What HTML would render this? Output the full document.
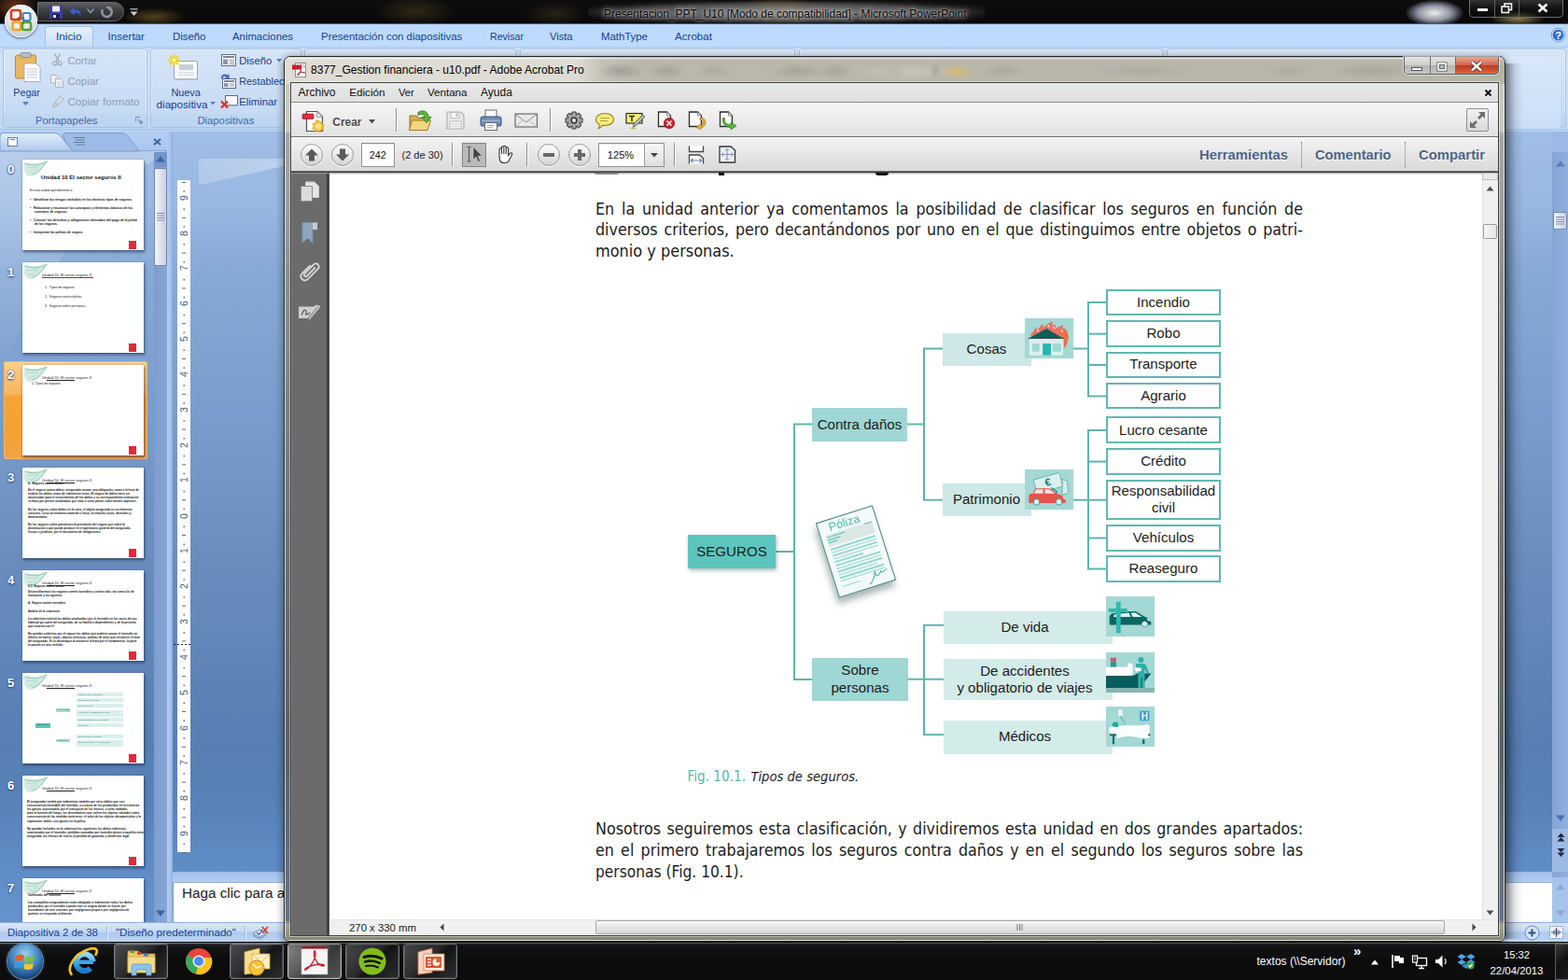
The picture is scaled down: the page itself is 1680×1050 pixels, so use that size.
<!DOCTYPE html>
<html lang="es">
<head>
<meta charset="utf-8">
<title>Presentacion_PPT_U10 - Microsoft PowerPoint</title>
<style>
*{box-sizing:border-box;margin:0;padding:0}
html,body{width:1680px;height:1050px;overflow:hidden;background:#0b0b0b}
body{position:relative;font-family:"Liberation Sans",sans-serif;font-size:12px;color:#15428b}
.a{position:absolute}
.t{position:absolute;white-space:nowrap;line-height:1}
svg{overflow:visible}
</style>
</head>
<body>
<!-- PowerPoint -->
<div class="a" style="left:0px;top:141px;width:1680px;height:847px;background:linear-gradient(#a0bee6,#98b7e1 9.3%,#87a9d5 18%,#7497c8 42.4%,#698cbd 54.8%,#577fb3 77.8%,#5882b8 85%,#5f8bc4 92%,#6390cb 96.7%,#6592cd);"></div><div class="a" style="left:0px;top:141px;width:179px;height:847px;overflow:hidden"><svg class="a" style="left:0px;top:0px;" width="179" height="300" viewBox="0 0 179 300"><defs><linearGradient id="sw" x1="0" y1="0" x2="0" y2="1"><stop offset="0" stop-color="#fff" stop-opacity=".28"/><stop offset="1" stop-color="#fff" stop-opacity="0"/></linearGradient></defs><path d="M0 0 H179 V20 C120 60 60 120 0 260 Z" fill="url(#sw)"/></svg></div><div class="a" style="left:0px;top:141px;width:179px;height:21px;background:linear-gradient(#b5cff2,#a9c6ee);border-bottom:1px solid #86a5d3"></div><svg class="a" style="left:0px;top:142px;" width="150" height="20" viewBox="0 0 150 20"><defs><linearGradient id="tg1" x1="0" y1="0" x2="0" y2="1"><stop offset="0" stop-color="#e3edfb"/><stop offset="1" stop-color="#aec9ee"/></linearGradient></defs><path d="M0 20 V4 Q0 0.5 4 0.5 H58 Q62 0.5 65 4 L78 20 Z" fill="url(#tg1)" stroke="#7f9dcd" stroke-width="1"/><path d="M71 11 L68 5 Q66 0.5 72 0.5 H130 Q134 0.5 137 4 L149 20 H78 Z" fill="#9dbbe6" stroke="#7c9bcb" stroke-width="1"/><rect x="8.5" y="5.5" width="10" height="9" fill="#fdfdfe" stroke="#6b7f9f"/><path d="M11 7.5 H16" stroke="#6b7f9f" stroke-width="1"/><path d="M79 5.5 H91 M81 8 H91 M79 10.5 H91 M81 13 H91" stroke="#6b7f9f" stroke-width="1"/></svg><svg class="a" style="left:164px;top:148px;" width="9" height="8" viewBox="0 0 9 8"><path d="M1 1 L8 7 M8 1 L1 7" stroke="#3f62a0" stroke-width="2"/></svg><div class="a" style="left:4px;top:387px;width:154px;height:105px;background:linear-gradient(#f9cf95,#f8b45c 33%,#f6a336 36%,#f5a234 80%,#f0a54a);border:1px solid #f2b772;border-radius:2px"></div><div class="a" style="left:24px;top:171px;width:130px;height:97px;background:#fff;box-shadow:1px 2px 3px rgba(20,35,70,.6),0 0 1px rgba(30,50,90,.5);overflow:hidden"><svg class="a" style="left:1px;top:1px" width="30" height="20" viewBox="0 0 30 20"><path d="M1 2 C9 4 20 3 27 0 C22 6 19 14 9 17 C4 18 1 14 1 9 Z" fill="#cfe9df" opacity=".9"/><path d="M2 3 C10 6 18 5 25 1 C20 7 17 13 9 15" fill="none" stroke="#8fc9b3" stroke-width="1"/><path d="M4 7 C8 8 12 8 15 6 C14 10 10 13 6 12" fill="none" stroke="#a9d6c6" stroke-width=".8"/></svg><div class="a" style="left:113.5px;top:87px;width:8.5px;height:9px;background:#e4283c"></div><span class="t" style="left:20px;top:16px;font-size:6px;color:#111;font-weight:bold;">Unidad 10 El sector seguros II</span><span class="t" style="left:8px;top:32px;font-size:3.2px;color:#111;">En esta unidad aprenderemos a:</span><span class="t" style="left:8px;top:42px;font-size:3.4px;color:#111;font-weight:bold;">•&nbsp;&nbsp;&nbsp;Identificar los riesgos incluidos en los distintos tipos de seguros.</span><span class="t" style="left:8px;top:51px;font-size:3.4px;color:#111;font-weight:bold;">•&nbsp;&nbsp;&nbsp;Relacionar y reconocer los conceptos y elementos básicos de los</span><span class="t" style="left:13px;top:55px;font-size:3.4px;color:#111;font-weight:bold;">contratos de seguros.</span><span class="t" style="left:8px;top:64px;font-size:3.4px;color:#111;font-weight:bold;">•&nbsp;&nbsp;&nbsp;Conocer los derechos y obligaciones derivados del pago de la prima</span><span class="t" style="left:13px;top:68px;font-size:3.4px;color:#111;font-weight:bold;">de los seguros.</span><span class="t" style="left:8px;top:77px;font-size:3.4px;color:#111;font-weight:bold;">•&nbsp;&nbsp;&nbsp;Interpretar las pólizas de seguro.</span></div><span class="t" style="left:8px;top:175px;font-size:13px;color:#fff;font-weight:bold;text-shadow:0 1px 2px #24447c,0 0 2px #2f5590">0</span><div class="a" style="left:24px;top:281px;width:130px;height:97px;background:#fff;box-shadow:1px 2px 3px rgba(20,35,70,.6),0 0 1px rgba(30,50,90,.5);overflow:hidden"><svg class="a" style="left:1px;top:1px" width="30" height="20" viewBox="0 0 30 20"><path d="M1 2 C9 4 20 3 27 0 C22 6 19 14 9 17 C4 18 1 14 1 9 Z" fill="#cfe9df" opacity=".9"/><path d="M2 3 C10 6 18 5 25 1 C20 7 17 13 9 15" fill="none" stroke="#8fc9b3" stroke-width="1"/><path d="M4 7 C8 8 12 8 15 6 C14 10 10 13 6 12" fill="none" stroke="#a9d6c6" stroke-width=".8"/></svg><div class="a" style="left:113.5px;top:87px;width:8.5px;height:9px;background:#e4283c"></div><span class="t" style="left:21px;top:12px;font-size:3.9px;color:#222;">Unidad 10. El sector seguros II</span><div class="a" style="left:26px;top:16.2px;width:30px;height:.6px;background:#222"></div><span class="t" style="left:24px;top:26px;font-size:3.5px;color:#111;">1.&nbsp;&nbsp;Tipos de seguros.</span><span class="t" style="left:24px;top:36px;font-size:3.5px;color:#111;">2.&nbsp;&nbsp;Seguros contra daños.</span><span class="t" style="left:24px;top:46px;font-size:3.5px;color:#111;">3.&nbsp;&nbsp;Seguros sobre personas.</span><div class="a" style="left:21px;top:16px;width:55px;height:1px;background:#b02020"></div></div><span class="t" style="left:8px;top:285px;font-size:13px;color:#fff;font-weight:bold;text-shadow:0 1px 2px #24447c,0 0 2px #2f5590">1</span><div class="a" style="left:24px;top:391px;width:130px;height:97px;background:#fff;box-shadow:1px 2px 3px rgba(20,35,70,.6),0 0 1px rgba(30,50,90,.5);overflow:hidden"><svg class="a" style="left:1px;top:1px" width="30" height="20" viewBox="0 0 30 20"><path d="M1 2 C9 4 20 3 27 0 C22 6 19 14 9 17 C4 18 1 14 1 9 Z" fill="#cfe9df" opacity=".9"/><path d="M2 3 C10 6 18 5 25 1 C20 7 17 13 9 15" fill="none" stroke="#8fc9b3" stroke-width="1"/><path d="M4 7 C8 8 12 8 15 6 C14 10 10 13 6 12" fill="none" stroke="#a9d6c6" stroke-width=".8"/></svg><div class="a" style="left:113.5px;top:87px;width:8.5px;height:9px;background:#e4283c"></div><span class="t" style="left:21px;top:12px;font-size:3.9px;color:#222;">Unidad 10. El sector seguros II</span><div class="a" style="left:26px;top:16.2px;width:30px;height:.6px;background:#222"></div><span class="t" style="left:10px;top:19px;font-size:3.5px;color:#111;">1. Tipos de seguros.</span></div><span class="t" style="left:8px;top:395px;font-size:13px;color:#fff;font-weight:bold;text-shadow:0 1px 2px #24447c,0 0 2px #2f5590">2</span><div class="a" style="left:24px;top:501px;width:130px;height:97px;background:#fff;box-shadow:1px 2px 3px rgba(20,35,70,.6),0 0 1px rgba(30,50,90,.5);overflow:hidden"><svg class="a" style="left:1px;top:1px" width="30" height="20" viewBox="0 0 30 20"><path d="M1 2 C9 4 20 3 27 0 C22 6 19 14 9 17 C4 18 1 14 1 9 Z" fill="#cfe9df" opacity=".9"/><path d="M2 3 C10 6 18 5 25 1 C20 7 17 13 9 15" fill="none" stroke="#8fc9b3" stroke-width="1"/><path d="M4 7 C8 8 12 8 15 6 C14 10 10 13 6 12" fill="none" stroke="#a9d6c6" stroke-width=".8"/></svg><div class="a" style="left:113.5px;top:87px;width:8.5px;height:9px;background:#e4283c"></div><span class="t" style="left:21px;top:12px;font-size:3.9px;color:#222;">Unidad 10. El sector seguros II</span><div class="a" style="left:26px;top:16.2px;width:30px;height:.6px;background:#222"></div><span class="t" style="left:6px;top:16px;font-size:3.2px;color:#111;font-weight:bold;">2.&nbsp;&nbsp;Seguros contra daños</span><span class="t" style="left:6px;top:23px;font-size:3.1px;color:#111;font-weight:bold;">En el seguro contra daños, asegurador asume una obligación, como a la hora de</span><span class="t" style="left:6px;top:27.1px;font-size:3.1px;color:#111;font-weight:bold;">evaluar los daños como de indemnizar estos. El seguro de daños tiene un</span><span class="t" style="left:6px;top:31.2px;font-size:3.1px;color:#111;font-weight:bold;">amortizador para el resarcimiento de los daños y su correspondiente evaluación</span><span class="t" style="left:6px;top:35.3px;font-size:3.1px;color:#111;font-weight:bold;">se hace por peritos nombrados por unas u otras partes sobre bienes objetivos.</span><span class="t" style="left:6px;top:43.5px;font-size:3.1px;color:#111;font-weight:bold;">En los seguros sobre daños en la cosa, el objeto asegurado es un elemento</span><span class="t" style="left:6px;top:47.6px;font-size:3.1px;color:#111;font-weight:bold;">concreto. Cosa un elemento material o físico, la relación cosas, derechos y</span><span class="t" style="left:6px;top:51.7px;font-size:3.1px;color:#111;font-weight:bold;">determinados.</span><span class="t" style="left:6px;top:59.9px;font-size:3.1px;color:#111;font-weight:bold;">En los seguros sobre patrimonio la prestación del seguro que cubre la</span><span class="t" style="left:6px;top:64px;font-size:3.1px;color:#111;font-weight:bold;">disminución o que pueda producir en el patrimonio general del asegurado,</span><span class="t" style="left:6px;top:68.1px;font-size:3.1px;color:#111;font-weight:bold;">físicas o jurídicas, por el nacimiento de obligaciones.</span></div><span class="t" style="left:8px;top:505px;font-size:13px;color:#fff;font-weight:bold;text-shadow:0 1px 2px #24447c,0 0 2px #2f5590">3</span><div class="a" style="left:24px;top:611px;width:130px;height:97px;background:#fff;box-shadow:1px 2px 3px rgba(20,35,70,.6),0 0 1px rgba(30,50,90,.5);overflow:hidden"><svg class="a" style="left:1px;top:1px" width="30" height="20" viewBox="0 0 30 20"><path d="M1 2 C9 4 20 3 27 0 C22 6 19 14 9 17 C4 18 1 14 1 9 Z" fill="#cfe9df" opacity=".9"/><path d="M2 3 C10 6 18 5 25 1 C20 7 17 13 9 15" fill="none" stroke="#8fc9b3" stroke-width="1"/><path d="M4 7 C8 8 12 8 15 6 C14 10 10 13 6 12" fill="none" stroke="#a9d6c6" stroke-width=".8"/></svg><div class="a" style="left:113.5px;top:87px;width:8.5px;height:9px;background:#e4283c"></div><span class="t" style="left:21px;top:12px;font-size:3.9px;color:#222;">Unidad 10. El sector seguros II</span><div class="a" style="left:26px;top:16.2px;width:30px;height:.6px;background:#222"></div><span class="t" style="left:6px;top:16px;font-size:3.2px;color:#111;font-weight:bold;">2.1. Seguros sobre cosas</span><span class="t" style="left:6px;top:22px;font-size:3.1px;color:#111;font-weight:bold;">Desarrollaremos los seguros contra incendios y contra robo, así como los de</span><span class="t" style="left:6px;top:26.1px;font-size:3.1px;color:#111;font-weight:bold;">transporte y los agrarios.</span><span class="t" style="left:6px;top:34.3px;font-size:3.1px;color:#111;font-weight:bold;">A. Seguro contra incendios</span><span class="t" style="left:6px;top:42.5px;font-size:3.1px;color:#111;font-weight:bold;">Ámbito de la cobertura</span><span class="t" style="left:6px;top:50.7px;font-size:3.1px;color:#111;font-weight:bold;">La cobertura incluirá los daños producidos por el incendio en los casos de uso</span><span class="t" style="left:6px;top:54.8px;font-size:3.1px;color:#111;font-weight:bold;">habitual por parte del asegurado, de su familia o dependientes y de la persona</span><span class="t" style="left:6px;top:58.9px;font-size:3.1px;color:#111;font-weight:bold;">que conviva con él.</span><span class="t" style="left:6px;top:67.1px;font-size:3.1px;color:#111;font-weight:bold;">No quedan cubiertos por el seguro los daños que pudiera causar el incendio en</span><span class="t" style="left:6px;top:71.2px;font-size:3.1px;color:#111;font-weight:bold;">billetes de banco, joyas, objetos artísticos, piedras de valor que resulta en el bien</span><span class="t" style="left:6px;top:75.3px;font-size:3.1px;color:#111;font-weight:bold;">del asegurado. Si se declaraque al asumirse la hora por el fundamento, la parte</span><span class="t" style="left:6px;top:79.4px;font-size:3.1px;color:#111;font-weight:bold;">lo pactan en otro sentido.</span></div><span class="t" style="left:8px;top:615px;font-size:13px;color:#fff;font-weight:bold;text-shadow:0 1px 2px #24447c,0 0 2px #2f5590">4</span><div class="a" style="left:24px;top:721px;width:130px;height:97px;background:#fff;box-shadow:1px 2px 3px rgba(20,35,70,.6),0 0 1px rgba(30,50,90,.5);overflow:hidden"><svg class="a" style="left:1px;top:1px" width="30" height="20" viewBox="0 0 30 20"><path d="M1 2 C9 4 20 3 27 0 C22 6 19 14 9 17 C4 18 1 14 1 9 Z" fill="#cfe9df" opacity=".9"/><path d="M2 3 C10 6 18 5 25 1 C20 7 17 13 9 15" fill="none" stroke="#8fc9b3" stroke-width="1"/><path d="M4 7 C8 8 12 8 15 6 C14 10 10 13 6 12" fill="none" stroke="#a9d6c6" stroke-width=".8"/></svg><div class="a" style="left:113.5px;top:87px;width:8.5px;height:9px;background:#e4283c"></div><span class="t" style="left:21px;top:12px;font-size:3.9px;color:#222;">Unidad 10. El sector seguros II</span><div class="a" style="left:26px;top:16.2px;width:30px;height:.6px;background:#222"></div><div class="a" style="left:14px;top:53.8px;width:16px;height:4.8px;background:#5fc2b4"></div><div class="a" style="left:36px;top:37.8px;width:14.5px;height:3.8px;background:#a5dad3"></div><div class="a" style="left:36px;top:70.7px;width:14.5px;height:3.8px;background:#a5dad3"></div><span class="t" style="left:16px;top:54.6px;font-size:2.4px;color:#1f6e66;">SEGUROS</span><span class="t" style="left:38px;top:38.3px;font-size:2.1px;color:#2f7f78;">Contra daños</span><span class="t" style="left:38px;top:71.2px;font-size:2.1px;color:#2f7f78;">Sobre pers.</span><div class="a" style="left:58px;top:21px;width:50px;height:3.7px;background:#d9efec"></div><span class="t" style="left:59.5px;top:21.7px;font-size:2.3px;color:#2f7f78;">Incendio, robo, transporte</span><div class="a" style="left:58px;top:27px;width:50px;height:3.8px;background:#d9efec"></div><span class="t" style="left:59.5px;top:27.7px;font-size:2.3px;color:#2f7f78;">Lucro cesante, crédito</span><div class="a" style="left:58px;top:33.4px;width:50px;height:3.6px;background:#d9efec"></div><span class="t" style="left:59.5px;top:34.1px;font-size:2.3px;color:#2f7f78;">Seguro de vida</span><div class="a" style="left:58px;top:40px;width:50px;height:6.6px;background:#d9efec"></div><span class="t" style="left:59.5px;top:40.7px;font-size:2.3px;color:#2f7f78;">Accidentes y obligatorio de viajes</span><div class="a" style="left:58px;top:48.3px;width:50px;height:3.7px;background:#d9efec"></div><span class="t" style="left:59.5px;top:49px;font-size:2.3px;color:#2f7f78;">Responsabilidad civil, vehículos</span><div class="a" style="left:58px;top:54.2px;width:50px;height:3.8px;background:#d9efec"></div><span class="t" style="left:59.5px;top:54.9px;font-size:2.3px;color:#2f7f78;">Reaseguro</span><div class="a" style="left:58px;top:66.3px;width:50px;height:3.7px;background:#d9efec"></div><span class="t" style="left:59.5px;top:67px;font-size:2.3px;color:#2f7f78;">Seguros sobre personas</span><div class="a" style="left:58px;top:72.2px;width:50px;height:6.6px;background:#d9efec"></div><span class="t" style="left:59.5px;top:72.9px;font-size:2.3px;color:#2f7f78;">Seguros médicos y de accidentes</span></div><span class="t" style="left:8px;top:725px;font-size:13px;color:#fff;font-weight:bold;text-shadow:0 1px 2px #24447c,0 0 2px #2f5590">5</span><div class="a" style="left:24px;top:831px;width:130px;height:97px;background:#fff;box-shadow:1px 2px 3px rgba(20,35,70,.6),0 0 1px rgba(30,50,90,.5);overflow:hidden"><svg class="a" style="left:1px;top:1px" width="30" height="20" viewBox="0 0 30 20"><path d="M1 2 C9 4 20 3 27 0 C22 6 19 14 9 17 C4 18 1 14 1 9 Z" fill="#cfe9df" opacity=".9"/><path d="M2 3 C10 6 18 5 25 1 C20 7 17 13 9 15" fill="none" stroke="#8fc9b3" stroke-width="1"/><path d="M4 7 C8 8 12 8 15 6 C14 10 10 13 6 12" fill="none" stroke="#a9d6c6" stroke-width=".8"/></svg><div class="a" style="left:113.5px;top:87px;width:8.5px;height:9px;background:#e4283c"></div><span class="t" style="left:21px;top:12px;font-size:3.9px;color:#222;">Unidad 10. El sector seguros II</span><div class="a" style="left:26px;top:16.2px;width:30px;height:.6px;background:#222"></div><span class="t" style="left:5px;top:27px;font-size:3.1px;color:#111;font-weight:bold;">El asegurador tendrá que indemnizar también por otros daños que son</span><span class="t" style="left:5px;top:31.1px;font-size:3.1px;color:#111;font-weight:bold;">consecuencia inevitable del incendio, o a causa de los producidos en la extinción</span><span class="t" style="left:5px;top:35.2px;font-size:3.1px;color:#111;font-weight:bold;">los gastos ocasionados por el transporte de los efectos, o otras medidas</span><span class="t" style="left:5px;top:39.3px;font-size:3.1px;color:#111;font-weight:bold;">para la función del fuego, los desembolsos que sufren los objetos salvados como</span><span class="t" style="left:5px;top:43.4px;font-size:3.1px;color:#111;font-weight:bold;">consecuencia de las medidas anteriores, el valor de los objetos desaparecidos y la</span><span class="t" style="left:5px;top:47.5px;font-size:3.1px;color:#111;font-weight:bold;">reparación, daños, con gastos en la póliza.</span><span class="t" style="left:5px;top:55.7px;font-size:3.1px;color:#111;font-weight:bold;">No quedan incluidos en la cobertura los siguientes los daños indirectos,</span><span class="t" style="left:5px;top:59.8px;font-size:3.1px;color:#111;font-weight:bold;">ocasionados por el incendio, pérdidas causadas por incendio ajenos a aquellos área</span><span class="t" style="left:5px;top:63.9px;font-size:3.1px;color:#111;font-weight:bold;">asegurada, los efectos de rotura, la pérdida de garantías y deméritos legal.</span></div><span class="t" style="left:8px;top:835px;font-size:13px;color:#fff;font-weight:bold;text-shadow:0 1px 2px #24447c,0 0 2px #2f5590">6</span><div class="a" style="left:24px;top:941px;width:130px;height:97px;background:#fff;box-shadow:1px 2px 3px rgba(20,35,70,.6),0 0 1px rgba(30,50,90,.5);overflow:hidden"><svg class="a" style="left:1px;top:1px" width="30" height="20" viewBox="0 0 30 20"><path d="M1 2 C9 4 20 3 27 0 C22 6 19 14 9 17 C4 18 1 14 1 9 Z" fill="#cfe9df" opacity=".9"/><path d="M2 3 C10 6 18 5 25 1 C20 7 17 13 9 15" fill="none" stroke="#8fc9b3" stroke-width="1"/><path d="M4 7 C8 8 12 8 15 6 C14 10 10 13 6 12" fill="none" stroke="#a9d6c6" stroke-width=".8"/></svg><div class="a" style="left:113.5px;top:87px;width:8.5px;height:9px;background:#e4283c"></div><span class="t" style="left:21px;top:12px;font-size:3.9px;color:#222;">Unidad 10. El sector seguros II</span><div class="a" style="left:26px;top:16.2px;width:30px;height:.6px;background:#222"></div><span class="t" style="left:6px;top:17px;font-size:3.2px;color:#111;font-weight:bold;">Contenido del contrato</span><span class="t" style="left:6px;top:25.1px;font-size:3.1px;color:#111;font-weight:bold;">Las compañías aseguradoras están obligadas a indemnizar todos los daños</span><span class="t" style="left:6px;top:29.2px;font-size:3.1px;color:#111;font-weight:bold;">producidos por el incendio cuando este se origina donde se ficture por</span><span class="t" style="left:6px;top:33.3px;font-size:3.1px;color:#111;font-weight:bold;">incendiador de este contrato, por negligencia propia o por negligencia de</span><span class="t" style="left:6px;top:37.4px;font-size:3.1px;color:#111;font-weight:bold;">quienes se responda civilmente.</span></div><span class="t" style="left:8px;top:945px;font-size:13px;color:#fff;font-weight:bold;text-shadow:0 1px 2px #24447c,0 0 2px #2f5590">7</span><div class="a" style="left:165px;top:163px;width:14px;height:825px;background:linear-gradient(90deg,#7d9dcf,#88a7d6);"></div><div class="a" style="left:165px;top:163px;width:14px;height:16px;background:#7295cb;"></div><svg class="a" style="left:167px;top:166px;" width="10" height="8" viewBox="0 0 10 8"><path d="M0 7.5 L5 1 L10 7.5 Z" fill="#3e63a3"/></svg><div class="a" style="left:165px;top:180px;width:14px;height:105px;background:linear-gradient(90deg,#f4f5fa,#dfe3ee 50%,#c9cfe0);border:1px solid #6f86ad;border-radius:2px"></div><svg class="a" style="left:168px;top:228px;" width="8" height="9" viewBox="0 0 8 9"><path d="M0 .5H8M0 3H8M0 5.5H8M0 8H8" stroke="#7d8fb0" stroke-width="1"/></svg><svg class="a" style="left:167px;top:975px;" width="10" height="8" viewBox="0 0 10 8"><path d="M0 .5 L5 7 L10 .5 Z" fill="#3e63a3"/></svg><div class="a" style="left:179px;top:141px;width:6px;height:847px;background:linear-gradient(90deg,#b3cdf2,#a5c3ec 60%,#8caedd);"></div><svg class="a" style="left:213px;top:168px;" width="100" height="40" viewBox="0 0 100 40"><defs><linearGradient id="hl" x1="0" x2="1" y1="0" y2="0"><stop offset="0" stop-color="#fff" stop-opacity=".22"/><stop offset="1" stop-color="#fff" stop-opacity=".34"/></linearGradient></defs><path d="M0 2 H100 V8 L2 30 L0 30 Z" fill="url(#hl)"/></svg><div class="a" style="left:190px;top:193px;width:14px;height:720px;background:#fdfdfe;"></div><span class="t" style="left:192px;top:207px;width:10px;height:10px;font-size:10.5px;color:#4a5a78;transform:rotate(-90deg);text-align:center;line-height:10px">9</span><span class="t" style="left:192px;top:245px;width:10px;height:10px;font-size:10.5px;color:#4a5a78;transform:rotate(-90deg);text-align:center;line-height:10px">8</span><span class="t" style="left:192px;top:282px;width:10px;height:10px;font-size:10.5px;color:#4a5a78;transform:rotate(-90deg);text-align:center;line-height:10px">7</span><span class="t" style="left:192px;top:320px;width:10px;height:10px;font-size:10.5px;color:#4a5a78;transform:rotate(-90deg);text-align:center;line-height:10px">6</span><span class="t" style="left:192px;top:358px;width:10px;height:10px;font-size:10.5px;color:#4a5a78;transform:rotate(-90deg);text-align:center;line-height:10px">5</span><span class="t" style="left:192px;top:396px;width:10px;height:10px;font-size:10.5px;color:#4a5a78;transform:rotate(-90deg);text-align:center;line-height:10px">4</span><span class="t" style="left:192px;top:434px;width:10px;height:10px;font-size:10.5px;color:#4a5a78;transform:rotate(-90deg);text-align:center;line-height:10px">3</span><span class="t" style="left:192px;top:472px;width:10px;height:10px;font-size:10.5px;color:#4a5a78;transform:rotate(-90deg);text-align:center;line-height:10px">2</span><span class="t" style="left:192px;top:509px;width:10px;height:10px;font-size:10.5px;color:#4a5a78;transform:rotate(-90deg);text-align:center;line-height:10px">1</span><span class="t" style="left:192px;top:548px;width:10px;height:10px;font-size:10.5px;color:#4a5a78;transform:rotate(-90deg);text-align:center;line-height:10px">0</span><span class="t" style="left:192px;top:585px;width:10px;height:10px;font-size:10.5px;color:#4a5a78;transform:rotate(-90deg);text-align:center;line-height:10px">1</span><span class="t" style="left:192px;top:623px;width:10px;height:10px;font-size:10.5px;color:#4a5a78;transform:rotate(-90deg);text-align:center;line-height:10px">2</span><span class="t" style="left:192px;top:661px;width:10px;height:10px;font-size:10.5px;color:#4a5a78;transform:rotate(-90deg);text-align:center;line-height:10px">3</span><span class="t" style="left:192px;top:699px;width:10px;height:10px;font-size:10.5px;color:#4a5a78;transform:rotate(-90deg);text-align:center;line-height:10px">4</span><span class="t" style="left:192px;top:737px;width:10px;height:10px;font-size:10.5px;color:#4a5a78;transform:rotate(-90deg);text-align:center;line-height:10px">5</span><span class="t" style="left:192px;top:775px;width:10px;height:10px;font-size:10.5px;color:#4a5a78;transform:rotate(-90deg);text-align:center;line-height:10px">6</span><span class="t" style="left:192px;top:812px;width:10px;height:10px;font-size:10.5px;color:#4a5a78;transform:rotate(-90deg);text-align:center;line-height:10px">7</span><span class="t" style="left:192px;top:850px;width:10px;height:10px;font-size:10.5px;color:#4a5a78;transform:rotate(-90deg);text-align:center;line-height:10px">8</span><span class="t" style="left:192px;top:888px;width:10px;height:10px;font-size:10.5px;color:#4a5a78;transform:rotate(-90deg);text-align:center;line-height:10px">9</span><svg class="a" style="left:190px;top:193px;" width="14" height="720" viewBox="0 0 14 720"><rect x="5" y="2" width="4" height="1" fill="#5a6a88"/><rect x="6.5" y="11.4" width="1.5" height="1.5" fill="#5a6a88"/><rect x="6.5" y="30.3" width="1.5" height="1.5" fill="#5a6a88"/><rect x="5" y="39.8" width="4" height="1" fill="#5a6a88"/><rect x="6.5" y="49.2" width="1.5" height="1.5" fill="#5a6a88"/><rect x="6.5" y="68.1" width="1.5" height="1.5" fill="#5a6a88"/><rect x="5" y="77.6" width="4" height="1" fill="#5a6a88"/><rect x="6.5" y="87.1" width="1.5" height="1.5" fill="#5a6a88"/><rect x="6.5" y="105.9" width="1.5" height="1.5" fill="#5a6a88"/><rect x="5" y="115.4" width="4" height="1" fill="#5a6a88"/><rect x="6.5" y="124.9" width="1.5" height="1.5" fill="#5a6a88"/><rect x="6.5" y="143.8" width="1.5" height="1.5" fill="#5a6a88"/><rect x="5" y="153.2" width="4" height="1" fill="#5a6a88"/><rect x="6.5" y="162.6" width="1.5" height="1.5" fill="#5a6a88"/><rect x="6.5" y="181.5" width="1.5" height="1.5" fill="#5a6a88"/><rect x="5" y="191" width="4" height="1" fill="#5a6a88"/><rect x="6.5" y="200.4" width="1.5" height="1.5" fill="#5a6a88"/><rect x="6.5" y="219.4" width="1.5" height="1.5" fill="#5a6a88"/><rect x="5" y="228.8" width="4" height="1" fill="#5a6a88"/><rect x="6.5" y="238.2" width="1.5" height="1.5" fill="#5a6a88"/><rect x="6.5" y="257.1" width="1.5" height="1.5" fill="#5a6a88"/><rect x="5" y="266.6" width="4" height="1" fill="#5a6a88"/><rect x="6.5" y="276" width="1.5" height="1.5" fill="#5a6a88"/><rect x="6.5" y="294.9" width="1.5" height="1.5" fill="#5a6a88"/><rect x="5" y="304.4" width="4" height="1" fill="#5a6a88"/><rect x="6.5" y="313.8" width="1.5" height="1.5" fill="#5a6a88"/><rect x="6.5" y="332.8" width="1.5" height="1.5" fill="#5a6a88"/><rect x="5" y="342.2" width="4" height="1" fill="#5a6a88"/><rect x="6.5" y="351.6" width="1.5" height="1.5" fill="#5a6a88"/><rect x="6.5" y="370.5" width="1.5" height="1.5" fill="#5a6a88"/><rect x="5" y="380" width="4" height="1" fill="#5a6a88"/><rect x="6.5" y="389.5" width="1.5" height="1.5" fill="#5a6a88"/><rect x="6.5" y="408.3" width="1.5" height="1.5" fill="#5a6a88"/><rect x="5" y="417.8" width="4" height="1" fill="#5a6a88"/><rect x="6.5" y="427.2" width="1.5" height="1.5" fill="#5a6a88"/><rect x="6.5" y="446.1" width="1.5" height="1.5" fill="#5a6a88"/><rect x="5" y="455.6" width="4" height="1" fill="#5a6a88"/><rect x="6.5" y="465" width="1.5" height="1.5" fill="#5a6a88"/><rect x="6.5" y="484" width="1.5" height="1.5" fill="#5a6a88"/><rect x="5" y="493.4" width="4" height="1" fill="#5a6a88"/><rect x="6.5" y="502.8" width="1.5" height="1.5" fill="#5a6a88"/><rect x="6.5" y="521.8" width="1.5" height="1.5" fill="#5a6a88"/><rect x="5" y="531.2" width="4" height="1" fill="#5a6a88"/><rect x="6.5" y="540.6" width="1.5" height="1.5" fill="#5a6a88"/><rect x="6.5" y="559.5" width="1.5" height="1.5" fill="#5a6a88"/><rect x="5" y="569" width="4" height="1" fill="#5a6a88"/><rect x="6.5" y="578.4" width="1.5" height="1.5" fill="#5a6a88"/><rect x="6.5" y="597.3" width="1.5" height="1.5" fill="#5a6a88"/><rect x="5" y="606.8" width="4" height="1" fill="#5a6a88"/><rect x="6.5" y="616.2" width="1.5" height="1.5" fill="#5a6a88"/><rect x="6.5" y="635.1" width="1.5" height="1.5" fill="#5a6a88"/><rect x="5" y="644.6" width="4" height="1" fill="#5a6a88"/><rect x="6.5" y="654" width="1.5" height="1.5" fill="#5a6a88"/><rect x="6.5" y="672.9" width="1.5" height="1.5" fill="#5a6a88"/><rect x="5" y="682.4" width="4" height="1" fill="#5a6a88"/><rect x="6.5" y="691.8" width="1.5" height="1.5" fill="#5a6a88"/><rect x="6.5" y="710.8" width="1.5" height="1.5" fill="#5a6a88"/><rect x="5" y="720.2" width="4" height="1" fill="#5a6a88"/></svg><svg class="a" style="left:186px;top:689px;" width="20" height="4" viewBox="0 0 20 4"><path d="M0 1.5 H20" stroke="#222" stroke-width="1" stroke-dasharray="2 2"/></svg><div class="a" style="left:185px;top:934px;width:1495px;height:11px;background:linear-gradient(#9fbfea,#b3cef2);"></div><div class="a" style="left:185px;top:945px;width:1478px;height:43px;background:#fff;border-left:1px solid #7f9dcc;border-top:1px solid #8fb0df"></div><span class="t" style="left:195px;top:949px;font-size:15.26px;color:#222;">Haga clic para agregar notas</span><div class="a" style="left:1663px;top:163px;width:17px;height:825px;background:linear-gradient(90deg,#84a4d4,#90afdc);"></div><div class="a" style="left:1663px;top:141px;width:17px;height:22px;background:#9bb9e4;"></div><svg class="a" style="left:1667px;top:171px;" width="10" height="8" viewBox="0 0 10 8"><path d="M0 7.5 L5 1 L10 7.5 Z" fill="#5b7fba"/></svg><div class="a" style="left:1664px;top:227px;width:15px;height:19px;background:linear-gradient(90deg,#f4f5fa,#dfe3ee 50%,#c9cfe0);border:1px solid #6f86ad;border-radius:2px"></div><svg class="a" style="left:1667px;top:232px;" width="9" height="9" viewBox="0 0 9 9"><path d="M0 .5H9M0 3H9M0 5.5H9M0 8H9" stroke="#7d8fb0" stroke-width="1"/></svg><svg class="a" style="left:1667px;top:873px;" width="10" height="8" viewBox="0 0 10 8"><path d="M0 .5 L5 7 L10 .5 Z" fill="#4e71ad"/></svg><div class="a" style="left:1663px;top:888px;width:17px;height:46px;background:#9dbae4;"></div><svg class="a" style="left:1668px;top:892px;" width="9" height="28" viewBox="0 0 9 28"><path d="M0.5 5 L4.5 0.5 L8.5 5 Z M0.5 9.5 L4.5 5 L8.5 9.5 Z" fill="#1c2a44"/><path d="M0.5 17 L4.5 21.5 L8.5 17 Z M0.5 21.5 L4.5 26 L8.5 21.5 Z" fill="#1c2a44"/></svg><div class="a" style="left:1663px;top:940px;width:17px;height:48px;background:#a7c3ec;"></div><svg class="a" style="left:1667px;top:946px;" width="10" height="8" viewBox="0 0 10 8"><path d="M0 7.5 L5 1 L10 7.5 Z" fill="#8eaad6"/></svg><svg class="a" style="left:1667px;top:975px;" width="10" height="8" viewBox="0 0 10 8"><path d="M0 .5 L5 7 L10 .5 Z" fill="#8eaad6"/></svg><div class="a" style="left:0px;top:988px;width:1680px;height:21px;background:linear-gradient(#d9e7fa,#c5daf6 45%,#aecaee 52%,#bdd4f3);border-top:1px solid #8fb0df"></div><span class="t" style="left:8px;top:994px;font-size:11.4px;color:#15428b;">Diapositiva 2 de 38</span><div class="a" style="left:114px;top:992px;width:1px;height:15px;background:#9db9e0;"></div><div class="a" style="left:115px;top:992px;width:1px;height:15px;background:#e6f0fc;"></div><span class="t" style="left:124px;top:993px;font-size:11.62px;color:#15428b;">"Diseño predeterminado"</span><div class="a" style="left:262px;top:992px;width:1px;height:15px;background:#9db9e0;"></div><div class="a" style="left:263px;top:992px;width:1px;height:15px;background:#e6f0fc;"></div><svg class="a" style="left:270px;top:991px;" width="20" height="16" viewBox="0 0 20 16"><path d="M1 9 L8 5 L15 9 L8 13 Z" fill="#e8eef8" stroke="#5573a5" stroke-width=".8"/><path d="M1 11 L8 15 L15 11" fill="none" stroke="#5573a5" stroke-width=".8"/><path d="M5 8 L7.5 10.5 L11 5" fill="none" stroke="#3a64b0" stroke-width="1.3"/><path d="M11 2 L17 9 M17 2 L11 9" stroke="#e03a2a" stroke-width="1.8"/></svg><svg class="a" style="left:1633px;top:991px;" width="17" height="17" viewBox="0 0 17 17"><circle cx="8.5" cy="8.5" r="7.5" fill="#d5e4f8" stroke="#6a86b4" stroke-width="1"/><path d="M4.5 8.5 H12.5 M8.5 4.5 V12.5" stroke="#3b4f73" stroke-width="2"/></svg><svg class="a" style="left:1660px;top:992px;" width="15" height="14" viewBox="0 0 15 14"><rect x="0.5" y="0.5" width="14" height="13" fill="#eef3fb" stroke="#6a86b4" stroke-dasharray="1.5 1.2"/><path d="M7.5 2 V12 M2 7 H13" stroke="#3b4f73" stroke-width="1"/><path d="M5.5 4 L7.5 6 L9.5 4 M5.5 10 L7.5 8 L9.5 10 M4 5 L6 7 L4 9 M11 5 L9 7 L11 9" fill="none" stroke="#3b4f73" stroke-width=".9"/></svg>
<div class="a" style="left:0px;top:0px;width:1680px;height:25px;background:linear-gradient(#0d0d0d,#080808);overflow:hidden"><div class="a" style="left:790px;top:-6px;width:90px;height:34px;background:radial-gradient(ellipse at center,rgba(150,110,40,.55),rgba(60,40,10,0) 70%);"></div><div class="a" style="left:400px;top:-4px;width:90px;height:32px;background:radial-gradient(ellipse at center,rgba(120,90,40,.35),rgba(60,40,10,0) 70%);"></div><div class="a" style="left:560px;top:2px;width:70px;height:26px;background:radial-gradient(ellipse at center,rgba(110,90,50,.30),rgba(60,40,10,0) 70%);"></div><div class="a" style="left:1506px;top:0px;width:62px;height:28px;background:radial-gradient(ellipse at center,rgba(250,250,245,.95),rgba(200,205,230,.7) 40%,rgba(90,95,120,0) 72%);"></div><div class="a" style="left:1596px;top:12px;width:60px;height:16px;background:radial-gradient(ellipse at center,rgba(230,200,120,.6),rgba(120,100,50,0) 70%);"></div><div class="a" style="left:0px;top:0px;width:40px;height:26px;background:radial-gradient(ellipse at 40% 30%,rgba(200,90,40,.55),rgba(60,40,10,0) 70%);"></div><div class="a" style="left:130px;top:8px;width:70px;height:20px;background:radial-gradient(ellipse at center,rgba(190,150,60,.4),rgba(60,40,10,0) 70%);"></div><div class="a" style="left:630px;top:1px;width:425px;height:24px;background:radial-gradient(ellipse at center,rgba(150,150,150,.85),rgba(120,120,120,.6) 50%,rgba(60,60,60,.25) 72%,rgba(40,40,40,0) 85%);border-radius:12px"></div><div class="a" style="left:40px;top:2px;width:93px;height:21px;background:linear-gradient(#6a6d72,#45474b 45%,#2b2c2f);border-radius:0 11px 11px 0;border:1px solid #77797d;opacity:.85"></div></div><span class="t" style="left:647px;top:9px;font-size:11.98px;color:#0a0a0a;text-shadow:0 0 6px rgba(230,230,230,.9),0 0 3px rgba(220,220,220,.7)">Presentacion_PPT_U10 [Modo de compatibilidad] - Microsoft PowerPoint</span><svg class="a" style="left:53px;top:6px;" width="14" height="14" viewBox="0 0 14 14"><rect x="0" y="0" width="14" height="14" rx="1" fill="#3b3f9a"/><rect x="3" y="0.5" width="8" height="6" fill="#e8ecf6"/><rect x="3" y="9" width="8" height="5" fill="#1d1f55"/><rect x="4" y="10" width="3" height="3" fill="#dfe3f3"/></svg><svg class="a" style="left:73px;top:6px;" width="16" height="14" viewBox="0 0 16 14"><path d="M1 6 L7 1.5 V4.5 C12 4 14.5 7 13 12 C12.5 8.5 10.5 7.5 7 7.7 V10.5 Z" fill="#3f62c4" stroke="#27408f" stroke-width=".6"/></svg><svg class="a" style="left:93px;top:9px;" width="8" height="6" viewBox="0 0 8 6"><path d="M0.5 0.5 L4 4.5 L7.5 0.5" fill="none" stroke="#9da3ad" stroke-width="1.2"/></svg><svg class="a" style="left:106px;top:6px;" width="16" height="14" viewBox="0 0 16 14"><path d="M10.5 2 A5.2 5.2 0 1 1 4 4.2" fill="none" stroke="#8e939c" stroke-width="2.6"/><path d="M7 1 L12.5 1 L12.5 6.2 Z" fill="#8e939c"/></svg><svg class="a" style="left:139px;top:9px;" width="9" height="9" viewBox="0 0 9 9"><path d="M0.5 0.8 H8.5" stroke="#c9ccd2" stroke-width="1.2"/><path d="M0.5 3.5 L4.5 8 L8.5 3.5 Z" fill="#c9ccd2"/></svg><div class="a" style="left:1574px;top:0px;width:101px;height:19px;background:linear-gradient(rgba(120,120,125,.35),rgba(30,30,32,.35) 50%,rgba(10,10,10,.4));border:1px solid #6d6f73;border-top:none;border-radius:0 0 5px 5px"></div><div class="a" style="left:1601px;top:0px;width:1px;height:18px;background:#5d5f63;"></div><div class="a" style="left:1627px;top:0px;width:1px;height:18px;background:#5d5f63;"></div><div class="a" style="left:1583px;top:9px;width:11px;height:3px;background:#f2f2f2;box-shadow:0 0 1px #000"></div><svg class="a" style="left:1608px;top:3px;" width="13" height="12" viewBox="0 0 13 12"><rect x="4" y="1" width="7.5" height="6.5" fill="none" stroke="#f2f2f2" stroke-width="1.6"/><rect x="1" y="4" width="7.5" height="6.5" fill="#222" stroke="#f2f2f2" stroke-width="1.6"/></svg><svg class="a" style="left:1647px;top:3px;" width="12" height="11" viewBox="0 0 12 11"><path d="M1.5 1.5 L10.5 9.5 M10.5 1.5 L1.5 9.5" stroke="#f4f4f4" stroke-width="2.6"/></svg><div class="a" style="left:0px;top:25px;width:1680px;height:25px;background:linear-gradient(#bcd8fb,#bfdbff);border-top:1px solid #4c5a6e"></div><div class="a" style="left:48px;top:28px;width:52px;height:23px;background:linear-gradient(#e4effc,#d5e5f9 60%,#c9def6);border:1px solid #a3c0e6;border-bottom:none;border-radius:4px 4px 0 0"></div><span class="t" style="left:60px;top:33px;font-size:11.78px;color:#15428b;">Inicio</span><span class="t" style="left:115.5px;top:33px;font-size:11.65px;color:#15428b;">Insertar</span><span class="t" style="left:185px;top:34px;font-size:11.4px;color:#15428b;">Diseño</span><span class="t" style="left:249px;top:34px;font-size:11.35px;color:#15428b;">Animaciones</span><span class="t" style="left:344px;top:34px;font-size:11.45px;color:#15428b;">Presentación con diapositivas</span><span class="t" style="left:525px;top:34px;font-size:10.62px;color:#15428b;">Revisar</span><span class="t" style="left:589px;top:34px;font-size:11.11px;color:#15428b;">Vista</span><span class="t" style="left:644px;top:34px;font-size:11.39px;color:#15428b;">MathType</span><span class="t" style="left:723px;top:33px;font-size:11.61px;color:#15428b;">Acrobat</span><svg class="a" style="left:1662px;top:30px;" width="15" height="15" viewBox="0 0 15 15"><circle cx="7.5" cy="7.5" r="6.6" fill="#2f6fd0" stroke="#e9f1fc" stroke-width="1.2"/><circle cx="7.5" cy="7.5" r="7.3" fill="none" stroke="#3b6ab5" stroke-width=".6"/></svg><span class="t" style="left:1666.14px;top:33px;font-size:11px;color:#fff;font-weight:bold;">?</span><div class="a" style="left:5px;top:5px;width:35px;height:35px;background:radial-gradient(circle at 50% 35%,#ffffff,#e9edf3 45%,#c4cad6 75%,#9da6b6);border-radius:50%;box-shadow:0 1px 3px rgba(0,0,0,.6),inset 0 0 0 1px rgba(255,255,255,.8)"></div><svg class="a" style="left:11px;top:10px;" width="24" height="24" viewBox="0 0 24 24"><rect x="1" y="1" width="10" height="10" rx="2" fill="none" stroke="#d2451e" stroke-width="2.6"/><rect x="13.5" y="4" width="8" height="8" rx="1.5" fill="none" stroke="#3f86c9" stroke-width="2.2"/><rect x="2.5" y="13.5" width="8.5" height="8.5" rx="1.5" fill="none" stroke="#f0a21c" stroke-width="2.4"/><rect x="13" y="14" width="9" height="8" rx="1.5" fill="none" stroke="#5aa02c" stroke-width="2.4"/><circle cx="9" cy="9.5" r="1.3" fill="#a2391c"/><circle cx="14" cy="9.5" r="1.3" fill="#2d6cae"/><circle cx="9" cy="14.5" r="1.3" fill="#e8b54a"/><circle cx="14" cy="14.5" r="1.3" fill="#4c8f2a"/></svg><div class="a" style="left:0px;top:50px;width:1680px;height:88px;background:linear-gradient(#c8ddf8,#d2e3f8 18%,#c9dcf5 72%,#c0d6f2);border-top:1px solid #a9c6ea"></div><div class="a" style="left:0px;top:138px;width:1680px;height:3px;background:linear-gradient(#a8c5eb,#bcd6f6);"></div><div class="a" style="left:3px;top:52px;width:155px;height:85px;background:linear-gradient(#d6e5f8,#cfe0f6 40%,#c6daf3 80%,#c2d7f2);border:1px solid #a7c2e4;border-radius:3px;box-shadow:inset 0 0 0 1px rgba(255,255,255,.45)"></div><div class="a" style="left:4px;top:122px;width:153px;height:14px;background:linear-gradient(#c1d8f3,#bdd4f1);border-radius:0 0 3px 3px"></div><span class="t" style="left:38px;top:124px;font-size:11.27px;color:#3e6aaa;">Portapapeles</span><div class="a" style="left:161px;top:52px;width:162px;height:85px;background:linear-gradient(#d6e5f8,#cfe0f6 40%,#c6daf3 80%,#c2d7f2);border:1px solid #a7c2e4;border-radius:3px;box-shadow:inset 0 0 0 1px rgba(255,255,255,.45)"></div><div class="a" style="left:162px;top:122px;width:160px;height:14px;background:linear-gradient(#c1d8f3,#bdd4f1);border-radius:0 0 3px 3px"></div><span class="t" style="left:211.4px;top:124px;font-size:11.31px;color:#3e6aaa;">Diapositivas</span><div class="a" style="left:326px;top:52px;width:227px;height:85px;background:linear-gradient(#d6e5f8,#cfe0f6 40%,#c6daf3 80%,#c2d7f2);border:1px solid #a7c2e4;border-radius:3px;box-shadow:inset 0 0 0 1px rgba(255,255,255,.45)"></div><div class="a" style="left:327px;top:122px;width:225px;height:14px;background:linear-gradient(#c1d8f3,#bdd4f1);border-radius:0 0 3px 3px"></div><div class="a" style="left:557px;top:52px;width:295px;height:85px;background:linear-gradient(#d6e5f8,#cfe0f6 40%,#c6daf3 80%,#c2d7f2);border:1px solid #a7c2e4;border-radius:3px;box-shadow:inset 0 0 0 1px rgba(255,255,255,.45)"></div><div class="a" style="left:558px;top:122px;width:293px;height:14px;background:linear-gradient(#c1d8f3,#bdd4f1);border-radius:0 0 3px 3px"></div><div class="a" style="left:856px;top:52px;width:390px;height:85px;background:linear-gradient(#d6e5f8,#cfe0f6 40%,#c6daf3 80%,#c2d7f2);border:1px solid #a7c2e4;border-radius:3px;box-shadow:inset 0 0 0 1px rgba(255,255,255,.45)"></div><div class="a" style="left:857px;top:122px;width:388px;height:14px;background:linear-gradient(#c1d8f3,#bdd4f1);border-radius:0 0 3px 3px"></div><div class="a" style="left:1250px;top:52px;width:428px;height:85px;background:linear-gradient(#d6e5f8,#cfe0f6 40%,#c6daf3 80%,#c2d7f2);border:1px solid #a7c2e4;border-radius:3px;box-shadow:inset 0 0 0 1px rgba(255,255,255,.45)"></div><div class="a" style="left:1251px;top:122px;width:426px;height:14px;background:linear-gradient(#c1d8f3,#bdd4f1);border-radius:0 0 3px 3px"></div><div class="a" style="left:1612px;top:60px;width:60px;height:78px;background:linear-gradient(#d9e8fa,#cfe1f8);border-radius:0 0 0 0;opacity:.8"></div><span class="t" style="left:14.3px;top:94px;font-size:10.72px;color:#15428b;">Pegar</span><svg class="a" style="left:24px;top:109px;" width="7" height="4" viewBox="0 0 7 4"><path d="M0 0 H7 L3.5 4 Z" fill="#5a7fb5"/></svg><span class="t" style="left:72.4px;top:60px;font-size:11.3px;color:#8f9db3;">Cortar</span><span class="t" style="left:72.4px;top:82px;font-size:11.34px;color:#8f9db3;">Copiar</span><span class="t" style="left:72.4px;top:103px;font-size:11.66px;color:#8f9db3;">Copiar formato</span><span class="t" style="left:183.4px;top:94px;font-size:10.9px;color:#15428b;">Nueva</span><span class="t" style="left:167.6px;top:106px;font-size:11.62px;color:#15428b;">diapositiva</span><svg class="a" style="left:225px;top:109px;" width="6" height="4" viewBox="0 0 6 4"><path d="M0 0 H6 L3 3.5 Z" fill="#5a7fb5"/></svg><span class="t" style="left:256.2px;top:60px;font-size:11.31px;color:#15428b;">Diseño</span><svg class="a" style="left:296px;top:63px;" width="6" height="4" viewBox="0 0 6 4"><path d="M0 0 H6 L3 3.5 Z" fill="#5a7fb5"/></svg><span class="t" style="left:256.2px;top:82px;font-size:10.87px;color:#15428b;">Restablecer</span><span class="t" style="left:256.2px;top:104px;font-size:11.32px;color:#15428b;">Eliminar</span><svg class="a" style="left:145px;top:125px;" width="8" height="8" viewBox="0 0 8 8"><path d="M0.5 5 V0.5 H5" fill="none" stroke="#6d8cb8" stroke-width="1"/><path d="M3 3 L7 7 M7 4 V7 H4" fill="none" stroke="#6d8cb8" stroke-width="1.2"/></svg><svg class="a" style="left:16px;top:55px;" width="28" height="33" viewBox="0 0 28 33"><rect x="0.5" y="4" width="22" height="25" rx="2" fill="#eab75e" stroke="#b98a3c"/><rect x="6" y="1.5" width="11" height="5" rx="1.5" fill="#b9bcc2" stroke="#7e838c" stroke-width=".8"/><path d="M10 13 H23 L27 17 V32.5 H10 Z" fill="#fbfbfd" stroke="#9aa3b2" stroke-width=".8"/><path d="M12.5 19 H24 M12.5 22 H24 M12.5 25 H24 M12.5 28 H24" stroke="#bfc6d2" stroke-width="1"/></svg><svg class="a" style="left:56px;top:57px;" width="11" height="14" viewBox="0 0 11 14"><path d="M2.5 0.5 L7 9 M8.5 0.5 L4 9" stroke="#9fa9b8" stroke-width="1.3" fill="none"/><circle cx="2.8" cy="11" r="2" fill="none" stroke="#9fa9b8" stroke-width="1.2"/><circle cx="8.2" cy="11" r="2" fill="none" stroke="#9fa9b8" stroke-width="1.2"/></svg><svg class="a" style="left:54px;top:80px;" width="14" height="14" viewBox="0 0 14 14"><path d="M0.5 0.5 H6 L8 2.5 V9 H0.5 Z" fill="#e9eef6" stroke="#a5afbf" stroke-width=".9"/><path d="M5.5 4.5 H11 L13.5 7 V13.5 H5.5 Z" fill="#f1f4f9" stroke="#a5afbf" stroke-width=".9"/><path d="M7 8 H12 M7 10 H12 M7 12 H12" stroke="#c2cad6" stroke-width=".8"/></svg><svg class="a" style="left:55px;top:102px;" width="14" height="14" viewBox="0 0 14 14"><path d="M9 1 L13 4 L7 10 L4 8 Z" fill="#d9dee6" stroke="#a5afbf" stroke-width=".9"/><path d="M4 8 L7 10 L3.5 13.5 L0.8 12 Z" fill="#c9cfda" stroke="#a5afbf" stroke-width=".8"/></svg><svg class="a" style="left:180px;top:58px;" width="34" height="30" viewBox="0 0 34 30"><rect x="6.5" y="7.5" width="25" height="19" rx="1.5" fill="#f7f9fc" stroke="#9aa5b5"/><rect x="12" y="11" width="15" height="6" fill="#c9cdd6"/><path d="M11 20 H28 M11 22.5 H28" stroke="#cfd3db" stroke-width="1"/><rect x="7" y="26" width="25" height="2" fill="#b6bcc8"/><path d="M6.5 0 V13 M0 6.5 H13 M2 2 L11 11 M11 2 L2 11" stroke="#f3d21f" stroke-width="1.8"/><circle cx="6.5" cy="6.5" r="2" fill="#fff6a0"/></svg><svg class="a" style="left:237px;top:58px;" width="16" height="13" viewBox="0 0 16 13"><rect x="0.5" y="0.5" width="15" height="12" fill="#fafbfd" stroke="#5f6b7d"/><rect x="2" y="2" width="12" height="2" fill="#7c8797"/><rect x="2" y="5.5" width="5" height="5.5" fill="#8c96a5"/><path d="M8.5 6.5 H14 M8.5 8.5 H14 M8.5 10.5 H14" stroke="#8c96a5" stroke-width="1"/></svg><svg class="a" style="left:236px;top:78px;" width="18" height="17" viewBox="0 0 18 17"><rect x="2.5" y="6.5" width="14" height="10" fill="#fafbfd" stroke="#5f6b7d"/><rect x="4" y="8" width="11" height="2" fill="#7c8797"/><rect x="4" y="11" width="4.5" height="4" fill="#8c96a5"/><path d="M10 12 H15 M10 14 H15" stroke="#8c96a5" stroke-width="1"/><path d="M1 6 C1 2 5 0.5 8 3 L9 1.5 L9.5 6 L5 5.5 L6.5 4.2 C4.8 3 2.5 3.5 2.5 6 Z" fill="#3d76d0" stroke="#2b57a4" stroke-width=".5"/></svg><svg class="a" style="left:236px;top:102px;" width="19" height="15" viewBox="0 0 19 15"><rect x="5.5" y="0.5" width="13" height="10" fill="#fafbfd" stroke="#5f6b7d"/><rect x="6" y="10.5" width="13" height="1.5" fill="#aab2bf"/><path d="M1 6.5 L8 13.5 M8 6.5 L1 13.5" stroke="#e0331f" stroke-width="2.4"/></svg>
<!-- Taskbar -->
<div class="a" style="left:0px;top:1009px;width:1680px;height:41px;background:linear-gradient(#0a0a0a 0,#0a0a0a 1px,#72746f 1px,#72746f 2px,#2a2c2f 2px,#141516 5px,#0b0b0c 50%,#0d0d0e);"></div><div class="a" style="left:122px;top:1011px;width:58px;height:38px;background:linear-gradient(135deg,#4a4b4e,#2a2b2d 45%,#151516 55%,#2c2d2f);border:1px solid #77797d;border-radius:3px;box-shadow:inset 0 0 0 1px rgba(255,255,255,.12)"></div><div class="a" style="left:246px;top:1011px;width:58px;height:38px;background:linear-gradient(135deg,#4a4b4e,#2a2b2d 45%,#151516 55%,#2c2d2f);border:1px solid #77797d;border-radius:3px;box-shadow:inset 0 0 0 1px rgba(255,255,255,.12)"></div><div class="a" style="left:308px;top:1011px;width:58px;height:38px;background:linear-gradient(135deg,#8a8a8a,#5a5a5a 40%,#3a3a3a 60%,#555);border:1px solid #b9b9b9;border-radius:3px;box-shadow:inset 0 0 0 1px rgba(255,255,255,.12)"></div><div class="a" style="left:370px;top:1011px;width:58px;height:38px;background:linear-gradient(135deg,#4a4b4e,#2a2b2d 45%,#151516 55%,#2c2d2f);border:1px solid #77797d;border-radius:3px;box-shadow:inset 0 0 0 1px rgba(255,255,255,.12)"></div><div class="a" style="left:432px;top:1011px;width:58px;height:38px;background:linear-gradient(135deg,#4a4b4e,#2a2b2d 45%,#151516 55%,#2c2d2f);border:1px solid #77797d;border-radius:3px;box-shadow:inset 0 0 0 1px rgba(255,255,255,.12)"></div><div class="a" style="left:8px;top:1011px;width:38px;height:38px;background:radial-gradient(circle at 50% 30%,#9fd0f0,#3f86c4 45%,#17406f 80%,#0c2444);border-radius:50%;box-shadow:0 0 0 1px #6e8eb0,0 0 4px rgba(120,170,220,.6)"></div><svg class="a" style="left:15px;top:1018px;" width="24" height="24" viewBox="0 0 24 24"><path d="M2 6 C5 4 8 4 11 6 L10 12 C7 10.5 4.5 10.5 1.2 12 Z" fill="#e8602c"/><path d="M12.5 6.5 C15.5 8 18.5 8 22 6 L21 12 C18 13.8 15 13.8 11.7 12.3 Z" fill="#7fbf3a"/><path d="M1 13.5 C4 12 7 12 10 13.8 L9 19.8 C6 18.2 3.5 18.2 0.2 19.8 Z" fill="#3d9ae0"/><path d="M11.5 14 C14.5 15.7 17.5 15.7 20.8 13.8 L19.8 19.8 C16.8 21.5 13.8 21.5 10.5 20 Z" fill="#f5c431"/></svg><svg class="a" style="left:72px;top:1013px;" width="36" height="34" viewBox="0 0 36 34"><defs><linearGradient id="ieg" x1="0" y1="0" x2="0" y2="1"><stop offset="0" stop-color="#8fdcfb"/><stop offset=".55" stop-color="#3ba6ea"/><stop offset="1" stop-color="#1f78c8"/></linearGradient></defs><path d="M27.5 17.5 A9 9 0 1 0 25 24.5" fill="none" stroke="url(#ieg)" stroke-width="6"/><path d="M11 17.8 H28" stroke="#3ba6ea" stroke-width="4.5"/><path d="M4.5 31 C-1 23 8 9 23 4 C30 1.8 34 4 30.5 10" fill="none" stroke="#f2c321" stroke-width="2.6" stroke-linecap="round"/></svg><svg class="a" style="left:135px;top:1014px;" width="34" height="33" viewBox="0 0 34 33"><path d="M2 5 H13 L15 8 H31 V28 H2 Z" fill="#e9c869" stroke="#b8953c" stroke-width=".8"/><rect x="5" y="4" width="4" height="3" fill="#4b9b4b"/><rect x="12" y="6" width="4" height="3" fill="#d24a3a"/><rect x="19" y="8" width="5" height="3" fill="#4a86c9"/><path d="M2 11 H31 V28 H2 Z" fill="#f5dc8c" stroke="#c9a64a" stroke-width=".8"/><path d="M6 31 V21 Q6 19 8 19 H25 Q27 19 27 21 V31 H22 V25 H11 V31 Z" fill="#8cc4ee" stroke="#5b9bd0" stroke-width=".8"/></svg><svg class="a" style="left:198px;top:1015px;" width="30" height="30" viewBox="0 0 30 30"><circle cx="15" cy="15" r="14" fill="#e8453c"/><path d="M15 15 L2.9 8 A14 14 0 0 0 12 28.7 Z" fill="#3aa757"/><path d="M15 15 L12 28.7 A14 14 0 0 0 28.7 11 L20 11 Z" fill="#f8c21c"/><circle cx="15" cy="15" r="6.5" fill="#f3f3f3"/><circle cx="15" cy="15" r="5" fill="#4a8af4"/></svg><svg class="a" style="left:258px;top:1014px;" width="36" height="34" viewBox="0 0 36 34"><path d="M4 6 L20 2 L20 28 L4 30 Z" fill="#f7dc8e" stroke="#d6a93b" stroke-width=".8"/><path d="M12 8 H31 V24 H12 Z" fill="#fbefc6" stroke="#d6a93b" stroke-width=".8"/><path d="M12 8 L21.5 17 L31 8" fill="none" stroke="#d6a93b" stroke-width=".8"/><circle cx="17" cy="23" r="8" fill="#f6c33a" stroke="#c98f1a" stroke-width="1"/><path d="M13 19 L17 23 L22 21" fill="none" stroke="#fff7d6" stroke-width="1.6"/></svg><svg class="a" style="left:322px;top:1014px;" width="30" height="32" viewBox="0 0 30 32"><rect x="1" y="0" width="28" height="30" fill="#f6f6f6" stroke="#bdbdbd" stroke-width=".6"/><rect x="1" y="0" width="28" height="2.5" fill="#a11c24"/><path d="M15.5 5 C17.5 9 14 19 6 25 C4.5 26 4 24.5 5.5 23.5 C10 20.5 18 18.5 24 19.5 C26 20 25.5 21.5 23.5 21 C18 19.5 13.5 12 14.5 6 C14.7 4.6 15.2 4.5 15.5 5 Z" fill="none" stroke="#c8202c" stroke-width="1.3"/></svg><svg class="a" style="left:384px;top:1015px;" width="30" height="30" viewBox="0 0 30 30"><circle cx="15" cy="15" r="14.5" fill="#84bd1a"/><path d="M6 10.5 C12 8.5 19 9 25 12" fill="none" stroke="#111" stroke-width="3" stroke-linecap="round"/><path d="M7 15.5 C12 14 18 14.5 23 17" fill="none" stroke="#111" stroke-width="2.4" stroke-linecap="round"/><path d="M8 20 C12 19 17 19.4 21 21.5" fill="none" stroke="#111" stroke-width="2" stroke-linecap="round"/></svg><svg class="a" style="left:445px;top:1014px;" width="34" height="33" viewBox="0 0 34 33"><path d="M3 6 L18 2 L18 28 L3 30 Z" fill="#f7d2c0" stroke="#d8734a" stroke-width=".8"/><path d="M9 8 H31 V26 H9 Z" fill="#fbe9de" stroke="#d8734a" stroke-width=".8"/><rect x="11" y="11" width="17" height="12" rx="1" fill="#d9542c"/><circle cx="22.5" cy="17" r="4" fill="#fbe9de"/><path d="M22.5 17 V13 A4 4 0 0 1 26.5 17 Z" fill="#d9542c"/><path d="M13 14 H17 M13 17 H17 M13 20 H17" stroke="#fbe9de" stroke-width="1.5"/></svg><span class="t" style="left:1346.5px;top:1024px;font-size:12.04px;color:#fff;">textos (\\Servidor)</span><span class="t" style="left:1450px;top:1011px;font-size:15px;color:#fff;font-weight:bold;">»</span><svg class="a" style="left:1469px;top:1028px;" width="8" height="6" viewBox="0 0 8 6"><path d="M0 5.5 L4 0.5 L8 5.5 Z" fill="#fff"/></svg><svg class="a" style="left:1490px;top:1022px;" width="16" height="16" viewBox="0 0 16 16"><path d="M2 1 V15" stroke="#fff" stroke-width="1.6"/><path d="M4 2 H10 V4 H14 V10 H9 V8 H4 Z" fill="#fff"/></svg><svg class="a" style="left:1513px;top:1023px;" width="18" height="16" viewBox="0 0 18 16"><rect x="4.5" y="3.5" width="11" height="8" fill="#0c0c0c" stroke="#fff" stroke-width="1.3"/><path d="M7 14.5 H13 M10 12 V14.5" stroke="#fff" stroke-width="1.3"/><rect x="0.5" y="1" width="5" height="7" fill="#0c0c0c" stroke="#fff" stroke-width="1.2"/><path d="M2 3 H4 M2 5 H4" stroke="#fff" stroke-width=".8"/></svg><svg class="a" style="left:1537px;top:1022px;" width="16" height="16" viewBox="0 0 16 16"><path d="M1 6 H4 L8.5 1.5 V14.5 L4 10 H1 Z" fill="#fff"/><path d="M11 5 C12.5 7 12.5 9 11 11" fill="none" stroke="#fff" stroke-width="1.2"/></svg><svg class="a" style="left:1561px;top:1021px;" width="20" height="18" viewBox="0 0 20 18"><path d="M5 1 L10 4 L5 7 L0.5 4 Z M15 1 L19.5 4 L15 7 L10 4 Z M5 7 L10 10 L5 13 L0.5 10 Z M15 7 L19.5 10 L15 13 L10 10 Z" fill="#4ea2e6"/><path d="M5 14 L10 11 L15 14 L10 17 Z" fill="#3b8bd0"/><circle cx="14.5" cy="13.5" r="4" fill="#3aa546"/><path d="M12.5 13.5 L14 15 L16.5 12" fill="none" stroke="#fff" stroke-width="1.2"/></svg><span class="t" style="left:1611px;top:1018px;font-size:11.19px;color:#fff;">15:32</span><span class="t" style="left:1596.5px;top:1035px;font-size:11.39px;color:#fff;">22/04/2013</span><div class="a" style="left:1666px;top:1011px;width:14px;height:39px;background:linear-gradient(135deg,#3a3b3e,#111 50%,#1c1c1e);border:1px solid #5c5e62;border-right:none"></div>
<!-- Acrobat -->
<div class="a" style="left:1613px;top:68px;width:20px;height:938px;background:linear-gradient(90deg,rgba(0,5,15,.36),rgba(0,8,25,.24) 25%,rgba(0,10,30,.09) 55%,rgba(0,10,30,0) 95%);border-radius:0 8px 0 0"></div><div class="a" style="left:304px;top:60px;width:1309px;height:949px;background:linear-gradient(#c8c8bc 0,#c8c8bc 79px,#a2a7a9 83px,#9a9fa3 160px,#899093 234px,#767c82 440px,#6b7074 545px,#596267 740px,#616f7d 860px,#65748a 924px,#a3a391 930px,#8c8d78 943px,#7a7c66 949px);border-radius:7px 7px 6px 6px;border:1px solid #24272a;box-shadow:inset 0 0 0 1px rgba(255,255,255,.75),0 2px 9px 1px rgba(0,0,0,.4);overflow:hidden"><div class="a" style="left:0px;top:0px;width:1309px;height:29px;background:linear-gradient(90deg,rgba(222,220,212,1) 0,rgba(222,220,212,1) 312px,rgba(196,193,182,1) 340px,rgba(186,183,171,1) 380px,rgba(184,181,169,1) 100%);"></div><div class="a" style="left:335px;top:6px;width:50px;height:18px;background:radial-gradient(ellipse at center,rgba(90,92,95,0.3),rgba(90,92,95,0) 70%);"></div><div class="a" style="left:390px;top:6px;width:40px;height:18px;background:radial-gradient(ellipse at center,rgba(90,92,95,0.22),rgba(90,92,95,0) 70%);"></div><div class="a" style="left:440px;top:6px;width:40px;height:18px;background:radial-gradient(ellipse at center,rgba(90,92,95,0.12),rgba(90,92,95,0) 70%);"></div><div class="a" style="left:520px;top:6px;width:60px;height:18px;background:radial-gradient(ellipse at center,rgba(90,92,95,0.2),rgba(90,92,95,0) 70%);"></div><div class="a" style="left:570px;top:6px;width:40px;height:18px;background:radial-gradient(ellipse at center,rgba(90,92,95,0.18),rgba(90,92,95,0) 70%);"></div><div class="a" style="left:640px;top:6px;width:30px;height:18px;background:radial-gradient(ellipse at center,rgba(90,92,95,0.15),rgba(90,92,95,0) 70%);"></div><div class="a" style="left:690px;top:6px;width:14px;height:18px;background:radial-gradient(ellipse at center,rgba(90,92,95,0.25),rgba(90,92,95,0) 70%);"></div><div class="a" style="left:745px;top:6px;width:50px;height:18px;background:radial-gradient(ellipse at center,rgba(90,92,95,0.14),rgba(90,92,95,0) 70%);"></div><div class="a" style="left:860px;top:6px;width:120px;height:18px;background:radial-gradient(ellipse at center,rgba(90,92,95,0.1),rgba(90,92,95,0) 70%);"></div><div class="a" style="left:1050px;top:6px;width:50px;height:18px;background:radial-gradient(ellipse at center,rgba(90,92,95,0.1),rgba(90,92,95,0) 70%);"></div><div class="a" style="left:1120px;top:6px;width:90px;height:18px;background:radial-gradient(ellipse at center,rgba(90,92,95,0.16),rgba(90,92,95,0) 70%);"></div><div class="a" style="left:1270px;top:6px;width:40px;height:18px;background:radial-gradient(ellipse at center,rgba(90,92,95,0.2),rgba(90,92,95,0) 70%);"></div><div class="a" style="left:700px;top:8px;width:40px;height:16px;background:radial-gradient(ellipse at center,rgba(235,190,70,.55),rgba(235,190,70,0) 70%);"></div><div class="a" style="left:610px;top:6px;width:110px;height:20px;background:radial-gradient(ellipse at center,rgba(225,225,215,.35),rgba(225,225,215,0) 70%);"></div><div class="a" style="left:1px;top:1px;width:1307px;height:2px;background:linear-gradient(rgba(255,255,255,.8),rgba(255,255,255,0));"></div></div><svg class="a" style="left:312px;top:67px;" width="16" height="16" viewBox="0 0 16 16"><rect x="4.5" y="0.5" width="11" height="15" fill="#fff" stroke="#8f8f8f"/><path d="M11 0.5 L15.5 5 H11 Z" fill="#e9e9e9" stroke="#8f8f8f" stroke-width=".6"/><rect x="1" y="2.5" width="10" height="5" fill="#c3202d"/><path d="M7 13.5 C9.5 11 11 8.5 10.5 6 M6.5 13.5 L9 11 M9.5 10 L15 11" fill="none" stroke="#c3202d" stroke-width="1.1"/></svg><span class="t" style="left:333px;top:69px;font-size:12.06px;color:#000;">8377_Gestion financiera - u10.pdf - Adobe Acrobat Pro</span><div class="a" style="left:1504px;top:61px;width:102px;height:19px;border:1px solid #5c5f63;border-top:none;border-radius:0 0 5px 5px;overflow:hidden;box-shadow:0 0 0 1px rgba(255,255,255,.55)"><div class="a" style="left:0px;top:0px;width:28px;height:19px;background:linear-gradient(#e4e4e2,#cfcfcc 45%,#b5b5b1 50%,#c9c9c6);border-right:1px solid #6d7074"></div><div class="a" style="left:28px;top:0px;width:27px;height:19px;background:linear-gradient(#e4e4e2,#cfcfcc 45%,#b5b5b1 50%,#c9c9c6);border-right:1px solid #6d7074"></div><div class="a" style="left:55px;top:0px;width:47px;height:19px;background:linear-gradient(#e7a393,#d4674f 45%,#c03a22 50%,#d8643c 90%,#e08a5a);"></div></div><div class="a" style="left:1512px;top:72px;width:12px;height:4px;background:#fbfbfb;border:1px solid #55585c"></div><svg class="a" style="left:1539px;top:66px;" width="12" height="11" viewBox="0 0 12 11"><rect x="1" y="1" width="10" height="9" fill="none" stroke="#55585c" stroke-width="1"/><rect x="2" y="2" width="8" height="7" fill="none" stroke="#fbfbfb" stroke-width="1.4"/><rect x="3.5" y="3.5" width="5" height="4" fill="none" stroke="#55585c" stroke-width=".8"/></svg><svg class="a" style="left:1575px;top:65px;" width="14" height="12" viewBox="0 0 14 12"><path d="M2 1.5 L12 10.5 M12 1.5 L2 10.5" stroke="#4a2a25" stroke-width="4.2"/><path d="M2 1.5 L12 10.5 M12 1.5 L2 10.5" stroke="#fff" stroke-width="2.4"/></svg><div class="a" style="left:310px;top:87px;width:1297px;height:917px;background:rgba(255,255,255,.42);"></div><div class="a" style="left:311px;top:88px;width:1295px;height:915px;background:#3f4245;"></div><div class="a" style="left:312px;top:89px;width:1293px;height:21px;background:linear-gradient(#e9e9e9,#e0e0e0);border-bottom:1px solid #8c8c8c"></div><span class="t" style="left:319.5px;top:93px;font-size:12px;color:#111;">Archivo</span><span class="t" style="left:374.2px;top:93px;font-size:11.68px;color:#111;">Edición</span><span class="t" style="left:427px;top:94px;font-size:11.19px;color:#111;">Ver</span><span class="t" style="left:458px;top:94px;font-size:11.58px;color:#111;">Ventana</span><span class="t" style="left:515px;top:93px;font-size:12px;color:#111;">Ayuda</span><svg class="a" style="left:1590px;top:95px;" width="9" height="9" viewBox="0 0 9 9"><path d="M1.5 1.5 L7.5 7.5 M7.5 1.5 L1.5 7.5" stroke="#111" stroke-width="2"/></svg><div class="a" style="left:312px;top:110px;width:1293px;height:37px;background:linear-gradient(#f5f5f5,#ececec 50%,#e1e1e1);border-top:1px solid #fafafa;border-bottom:1px solid #6f6f6f"></div><div class="a" style="left:312px;top:147px;width:1293px;height:37px;background:linear-gradient(#f3f3f3,#e6e6e6 50%,#d9d9d9);border-top:1px solid #fbfbfb;border-bottom:1px solid #6a6a6a"></div><div class="a" style="left:423.5px;top:116px;width:1px;height:25px;background:#8d8d8d;"></div><div class="a" style="left:424.5px;top:116px;width:1px;height:25px;background:#fdfdfd;"></div><div class="a" style="left:588.5px;top:116px;width:1px;height:25px;background:#8d8d8d;"></div><div class="a" style="left:589.5px;top:116px;width:1px;height:25px;background:#fdfdfd;"></div><div class="a" style="left:483.5px;top:153px;width:1px;height:25px;background:#8d8d8d;"></div><div class="a" style="left:484.5px;top:153px;width:1px;height:25px;background:#fdfdfd;"></div><div class="a" style="left:563.5px;top:153px;width:1px;height:25px;background:#8d8d8d;"></div><div class="a" style="left:564.5px;top:153px;width:1px;height:25px;background:#fdfdfd;"></div><div class="a" style="left:721.5px;top:153px;width:1px;height:25px;background:#8d8d8d;"></div><div class="a" style="left:722.5px;top:153px;width:1px;height:25px;background:#fdfdfd;"></div><svg class="a" style="left:323px;top:117px;" width="26" height="25" viewBox="0 0 26 25"><path d="M5.5 2.5 H17 L22.5 8 V23.5 H5.5 Z" fill="#fff" stroke="#4f4f4f" stroke-width="1.2"/><path d="M16.5 2.5 V8.5 H22.5" fill="#eee" stroke="#8a8a8a" stroke-width=".8"/><rect x="1" y="5" width="12" height="5.5" rx=".8" fill="#d8323f" stroke="#9c1c28" stroke-width=".7"/><path d="M18 11.5 L19.5 14 L22.3 13.3 L22 16.2 L24.6 17.5 L22.5 19.5 L23.5 22.2 L20.7 22.3 L19.5 24.8 L17.3 23 L14.8 24.3 L14.3 21.5 L11.6 20.7 L13.2 18.3 L11.8 15.8 L14.6 15.3 L15.3 12.5 Z" fill="#f4c64b" stroke="#c48f1d" stroke-width=".7"/><circle cx="18" cy="18.3" r="3" fill="#f9de8d"/></svg><span class="t" style="left:356.3px;top:126px;font-size:11.94px;color:#4b4b4b;font-weight:bold;text-shadow:0 1px 0 #fff">Crear</span><svg class="a" style="left:395px;top:128px;" width="7" height="5" viewBox="0 0 7 5"><path d="M0 0 H7 L3.5 4.5 Z" fill="#4b4b4b"/></svg><svg class="a" style="left:437px;top:116px;" width="26" height="25" viewBox="0 0 26 25"><path d="M2 8 H9 L11 10.5 H21 V23 H2 Z" fill="#d8b24f" stroke="#8e6f21" stroke-width="1"/><path d="M4.5 13 H24.5 L21 23.5 H1.5 Z" fill="#f2d77f" stroke="#9c7c2a" stroke-width="1"/><path d="M11 4.5 C16 1 22 3.5 22 9.5 L25 9.5 L20 15.5 L15 9.5 L18 9.5 C18 6.5 15 5 11 7.5 Z" fill="#5cb83a" stroke="#2f7d1a" stroke-width=".9"/></svg><svg class="a" style="left:478px;top:119px;" width="20" height="20" viewBox="0 0 20 20"><path d="M1 1 H16 L19 4 V19 H1 Z" fill="#e8e8e8" stroke="#b1b1b1" stroke-width="1.2"/><rect x="5" y="1.5" width="9" height="6" fill="#f7f7f7" stroke="#b9b9b9" stroke-width=".9"/><rect x="10.5" y="2.5" width="2" height="3.5" fill="#bdbdbd"/><rect x="4" y="11" width="12" height="8" fill="#f4f4f4" stroke="#b9b9b9" stroke-width=".9"/><path d="M6 14 H14 M6 16.5 H14" stroke="#cfcfcf" stroke-width=".9"/></svg><svg class="a" style="left:514px;top:117px;" width="24" height="24" viewBox="0 0 24 24"><rect x="6" y="1" width="12" height="8" fill="#fff" stroke="#6a6a6a" stroke-width="1"/><path d="M3 8 H21 Q23 8 23 10 V16.5 Q23 18 21 18 H3 Q1 18 1 16.5 V10 Q1 8 3 8 Z" fill="#6f8fb8" stroke="#34506f" stroke-width="1"/><path d="M2 12.5 H22" stroke="#9db6d6" stroke-width="1.5"/><rect x="5.5" y="14.5" width="13" height="8" fill="#fff" stroke="#6a6a6a" stroke-width="1"/><path d="M8 17.5 H15 M8 19.8 H14" stroke="#c8a24a" stroke-width="1"/></svg><svg class="a" style="left:551px;top:121px;" width="26" height="16" viewBox="0 0 26 16"><rect x="1" y="1" width="23.5" height="14" fill="#e9e9e9" stroke="#6c6c6c" stroke-width="1.2"/><path d="M1.5 1.5 L12.8 10 L24 1.5" fill="none" stroke="#8c8c8c" stroke-width="1"/><path d="M1.5 14.5 L9.5 7.5 M24 14.5 L16 7.5" fill="none" stroke="#b4b4b4" stroke-width=".9"/></svg><svg class="a" style="left:605px;top:119px;" width="20" height="20" viewBox="0 0 20 20"><g transform="translate(10,10)"><rect x="-2.7" y="-9.6" width="5.4" height="6" rx="1" fill="#3d3d3d" transform="rotate(0)"/><rect x="-2.7" y="-9.6" width="5.4" height="6" rx="1" fill="#3d3d3d" transform="rotate(45)"/><rect x="-2.7" y="-9.6" width="5.4" height="6" rx="1" fill="#3d3d3d" transform="rotate(90)"/><rect x="-2.7" y="-9.6" width="5.4" height="6" rx="1" fill="#3d3d3d" transform="rotate(135)"/><rect x="-2.7" y="-9.6" width="5.4" height="6" rx="1" fill="#3d3d3d" transform="rotate(180)"/><rect x="-2.7" y="-9.6" width="5.4" height="6" rx="1" fill="#3d3d3d" transform="rotate(225)"/><rect x="-2.7" y="-9.6" width="5.4" height="6" rx="1" fill="#3d3d3d" transform="rotate(270)"/><rect x="-2.7" y="-9.6" width="5.4" height="6" rx="1" fill="#3d3d3d" transform="rotate(315)"/><circle r="7.3" fill="#3d3d3d"/><rect x="-1.7" y="-8.6" width="3.4" height="5" rx=".6" fill="#a6a6a6" transform="rotate(0)"/><rect x="-1.7" y="-8.6" width="3.4" height="5" rx=".6" fill="#a6a6a6" transform="rotate(45)"/><rect x="-1.7" y="-8.6" width="3.4" height="5" rx=".6" fill="#a6a6a6" transform="rotate(90)"/><rect x="-1.7" y="-8.6" width="3.4" height="5" rx=".6" fill="#a6a6a6" transform="rotate(135)"/><rect x="-1.7" y="-8.6" width="3.4" height="5" rx=".6" fill="#a6a6a6" transform="rotate(180)"/><rect x="-1.7" y="-8.6" width="3.4" height="5" rx=".6" fill="#a6a6a6" transform="rotate(225)"/><rect x="-1.7" y="-8.6" width="3.4" height="5" rx=".6" fill="#a6a6a6" transform="rotate(270)"/><rect x="-1.7" y="-8.6" width="3.4" height="5" rx=".6" fill="#a6a6a6" transform="rotate(315)"/><circle r="6.3" fill="#a6a6a6"/><circle r="3.7" fill="#3d3d3d"/><circle r="2" fill="#ededed"/></g></svg><svg class="a" style="left:637px;top:120px;" width="22" height="19" viewBox="0 0 22 19"><path d="M11 1.5 C17 1.5 20.5 4.5 20.5 8 C20.5 11.5 17 14.5 11 14.5 C10 14.5 9 14.4 8.2 14.2 C7.5 16 6 17.3 4 17.8 C5 16.5 5.3 15 5 13.3 C2.8 12 1.5 10.2 1.5 8 C1.5 4.5 5 1.5 11 1.5 Z" fill="#f7ec7c" stroke="#8f8321" stroke-width="1.1"/><path d="M6 6.5 H16 M6 9.5 H14" stroke="#b0a53c" stroke-width="1.1"/></svg><svg class="a" style="left:670px;top:120px;" width="22" height="19" viewBox="0 0 22 19"><rect x="1" y="1.5" width="17" height="10.5" fill="#f3f06c" stroke="#2e2e2e" stroke-width="1.2"/><path d="M4 3.8 H10 V5.3 H7.8 V10 H6.2 V5.3 H4 Z" fill="#333"/><path d="M18.5 3 L20.8 5 L11.5 14.5 L8.5 15.5 L9.3 12.5 Z" fill="#b9bfc8" stroke="#4c4c4c" stroke-width=".9"/><path d="M8.5 15.5 L6.5 17.8 H10.5 Z" fill="#e8d81c" stroke="#7b7b2a" stroke-width=".5"/></svg><svg class="a" style="left:704px;top:118px;" width="20" height="21" viewBox="0 0 20 21"><path d="M1.5 2 H10.5 L14.5 6 V17.5 H1.5 Z" fill="#fbfbfb" stroke="#2b2b2b" stroke-width="1.3"/><path d="M10.5 2 V6 H14.5" fill="#e6e6e6" stroke="#777" stroke-width=".8"/><circle cx="13" cy="14" r="5.6" fill="#c9232d" stroke="#8e121b" stroke-width=".8"/><path d="M10.5 11.5 L15.5 16.5 M15.5 11.5 L10.5 16.5" stroke="#fff" stroke-width="1.5"/></svg><svg class="a" style="left:737px;top:118px;" width="20" height="21" viewBox="0 0 20 21"><path d="M1.5 2 H10.5 L14.5 6 V17.5 H1.5 Z" fill="#fbfbfb" stroke="#2b2b2b" stroke-width="1.3"/><path d="M10.5 2 V6 H14.5" fill="#e6e6e6" stroke="#777" stroke-width=".8"/><path d="M9 18.5 L14 14.8 L14 16.3 C16 16 16.8 14.5 16.3 12.5 C15.8 11 14.5 10.3 13 10.6 L13 8.3 C16 7.8 18.5 9.5 18.8 12.5 C19.2 15.8 17 18.5 14 18.8 L14 20.5 Z" fill="#f0b13a" stroke="#a8741a" stroke-width=".8"/></svg><svg class="a" style="left:770px;top:118px;" width="20" height="21" viewBox="0 0 20 21"><path d="M1.5 2 H10.5 L14.5 6 V17.5 H1.5 Z" fill="#fbfbfb" stroke="#2b2b2b" stroke-width="1.3"/><path d="M10.5 2 V6 H14.5" fill="#e6e6e6" stroke="#777" stroke-width=".8"/><path d="M6.5 8.5 C5.5 13 8 15.5 13 15.5 L13 13 L19 17 L13 20.8 L13 18.3 C7 18.5 3.5 14.5 4.5 8.5 Z" fill="#5cb83a" stroke="#2f7d1a" stroke-width=".8"/></svg><div class="a" style="left:1571px;top:116px;width:24px;height:25px;background:linear-gradient(#f2f2f2,#d9d9d9);border:1px solid #8e8e8e;border-radius:2px"></div><svg class="a" style="left:1574px;top:119px;" width="18" height="19" viewBox="0 0 18 19"><path d="M17 1 V8 L14.5 5.5 L11 9 L9 7 L12.5 3.5 L10 1 Z" fill="#6e6e6e"/><path d="M1 18 V11 L3.5 13.5 L7 10 L9 12 L5.5 15.5 L8 18 Z" fill="#6e6e6e"/></svg><div class="a" style="left:321.5px;top:153.5px;width:24px;height:24px;background:linear-gradient(#fdfdfd,#e7e7e7 55%,#d2d2d2);border:1px solid #9a9a9a;border-radius:50%;box-shadow:0 1px 0 #fff"></div><svg class="a" style="left:325.5px;top:157.5px;" width="16" height="16" viewBox="0 0 16 16"><path d="M8 1.5 L15 8.5 H11 V14.5 H5 V8.5 H1 Z" fill="#5a5a5a"/></svg><div class="a" style="left:354.5px;top:153.5px;width:24px;height:24px;background:linear-gradient(#fdfdfd,#e7e7e7 55%,#d2d2d2);border:1px solid #9a9a9a;border-radius:50%;box-shadow:0 1px 0 #fff"></div><svg class="a" style="left:358.5px;top:157.5px;" width="16" height="16" viewBox="0 0 16 16"><path d="M8 14.5 L15 7.5 H11 V1.5 H5 V7.5 H1 Z" fill="#5a5a5a"/></svg><div class="a" style="left:387px;top:153px;width:36px;height:26px;background:#fff;border:1px solid #8f8f8f;box-shadow:inset 0 1px 1px rgba(0,0,0,.12)"></div><span class="t" style="left:395.8px;top:161px;font-size:10.79px;color:#111;">242</span><span class="t" style="left:430.5px;top:161px;font-size:11.04px;color:#222;">(2 de 30)</span><div class="a" style="left:495px;top:153px;width:26px;height:26px;background:#b9b9b9;border:1px solid #868686"></div><svg class="a" style="left:498px;top:156px;" width="20" height="20" viewBox="0 0 20 20"><path d="M2.5 1.5 H6.5 M2.5 17 H6.5 M4.5 1.5 V17" stroke="#555" stroke-width="1.1" fill="none"/><path d="M9 1.5 L9 15 L12.2 12 L14.5 17.5 L16.6 16.6 L14.3 11.3 L18.5 11 Z" fill="#444" stroke="#ddd" stroke-width=".5"/></svg><svg class="a" style="left:530px;top:155px;" width="21" height="21" viewBox="0 0 21 21"><path d="M5 11.5 V5 Q5 3.8 6.2 3.8 Q7.4 3.8 7.4 5 V9.5 V3 Q7.4 1.8 8.6 1.8 Q9.8 1.8 9.8 3 V9.5 V2.5 Q9.8 1.3 11 1.3 Q12.2 1.3 12.2 2.5 V9.8 V4 Q12.2 2.8 13.4 2.8 Q14.6 2.8 14.6 4 V12 L16.3 9.5 Q17.2 8.3 18.3 9 Q19.2 9.7 18.5 11 L15 17.5 Q14 19.5 11.5 19.5 H9.5 Q6.5 19.5 5.5 16.5 Z" fill="#fff" stroke="#333" stroke-width="1.1" stroke-linejoin="round"/></svg><div class="a" style="left:575.5px;top:153.5px;width:24px;height:24px;background:linear-gradient(#fdfdfd,#e7e7e7 55%,#d2d2d2);border:1px solid #9a9a9a;border-radius:50%;box-shadow:0 1px 0 #fff"></div><svg class="a" style="left:579.5px;top:157.5px;" width="16" height="16" viewBox="0 0 16 16"><rect x="2" y="6" width="12" height="4" fill="#6a6a6a"/></svg><div class="a" style="left:608.5px;top:153.5px;width:24px;height:24px;background:linear-gradient(#fdfdfd,#e7e7e7 55%,#d2d2d2);border:1px solid #9a9a9a;border-radius:50%;box-shadow:0 1px 0 #fff"></div><svg class="a" style="left:612.5px;top:157.5px;" width="16" height="16" viewBox="0 0 16 16"><path d="M2 6 H6 V2 H10 V6 H14 V10 H10 V14 H6 V10 H2 Z" fill="#6a6a6a"/></svg><div class="a" style="left:641px;top:153px;width:71px;height:26px;background:#fff;border:1px solid #8f8f8f;box-shadow:inset 0 1px 1px rgba(0,0,0,.12)"></div><div class="a" style="left:689.5px;top:154px;width:21.5px;height:24px;background:linear-gradient(#f7f7f7,#dedede);border-left:1px solid #9a9a9a"></div><span class="t" style="left:650.8px;top:161px;font-size:11.1px;color:#111;">125%</span><svg class="a" style="left:697px;top:163.5px;" width="8" height="5" viewBox="0 0 8 5"><path d="M0 0 H8 L4 4.5 Z" fill="#444"/></svg><svg class="a" style="left:737px;top:156px;" width="18" height="20" viewBox="0 0 18 20"><path d="M1.5 0.5 V6.5 H16.5 V0.5" fill="#fff" stroke="#444" stroke-width="1.3"/><path d="M1.5 19.5 V10 H12.5 L16.5 13.5 V19.5" fill="#fff" stroke="#444" stroke-width="1.3"/><path d="M3 16 H15 M3 16 L5.5 14 M3 16 L5.5 18 M15 16 L12.5 14 M15 16 L12.5 18" stroke="#6a7fb5" stroke-width="1.1" fill="none"/></svg><svg class="a" style="left:770px;top:156px;" width="19" height="19" viewBox="0 0 19 19"><path d="M1 1 H13 L17.5 5 V18 H1 Z" fill="#eef0f8" stroke="#333" stroke-width="1.3"/><path d="M9 3.5 V15.5 M3 9.5 H15.5 M9 3.5 L7 5.5 M9 3.5 L11 5.5 M9 15.5 L7 13.5 M9 15.5 L11 13.5 M3 9.5 L5 7.5 M3 9.5 L5 11.5 M15.5 9.5 L13.5 7.5 M15.5 9.5 L13.5 11.5" stroke="#7c8cbf" stroke-width="1" fill="none"/></svg><span class="t" style="left:1285px;top:159px;font-size:14.86px;color:#4d6484;font-weight:bold;text-shadow:0 1px 0 #fff">Herramientas</span><span class="t" style="left:1409px;top:159px;font-size:14.67px;color:#4d6484;font-weight:bold;text-shadow:0 1px 0 #fff">Comentario</span><span class="t" style="left:1520px;top:159px;font-size:14.86px;color:#4d6484;font-weight:bold;text-shadow:0 1px 0 #fff">Compartir</span><div class="a" style="left:1394px;top:152px;width:0px;height:28px;border-left:1px dotted #7a7a7a"></div><div class="a" style="left:1505px;top:152px;width:0px;height:28px;border-left:1px dotted #7a7a7a"></div><div class="a" style="left:312px;top:185px;width:1293px;height:817px;background:#fff;"></div><div class="a" style="left:312px;top:185px;width:39px;height:817px;background:#6b6b6b;border-right:1px solid #3f3f3f;box-shadow:inset 1px 0 0 #7b7b7b"></div><div class="a" style="left:351px;top:185px;width:2px;height:817px;background:linear-gradient(90deg,#333,#555);"></div><div class="a" style="left:312px;top:185px;width:1293px;height:2px;background:linear-gradient(#9a9a9a,rgba(154,154,154,0));"></div><svg class="a" style="left:321px;top:194px;" width="22" height="23" viewBox="0 0 22 23"><path d="M6.5 1 H16 L20.5 5.5 V17.5 H6.5 Z" fill="#e4e4e4" stroke="#cfcfcf" stroke-width="1"/><path d="M1.5 5.5 H13.5 V21.5 H1.5 Z" fill="#dcdcdc" stroke="#8a8a8a" stroke-width="1"/></svg><svg class="a" style="left:322px;top:237px;" width="20" height="26" viewBox="0 0 20 26"><path d="M2 1.5 H13 V23.5 L7.5 18 L2 23.5 Z" fill="#8fa6bf" stroke="#7590ad" stroke-width="1"/><path d="M13 1.5 H18 V9 H13 Z" fill="#c3cfdc"/></svg><svg class="a" style="left:320px;top:279px;" width="24" height="24" viewBox="0 0 24 24"><path d="M17.5 8 L9 16.5 Q7.5 18 6.3 16.8 Q5 15.5 6.5 14 L16 4.5 Q18.5 2.2 20.8 4.5 Q23 6.8 20.5 9.3 L10 19.8 Q6.5 23 3.5 20 Q0.7 17 4 13.7 L12 5.7" fill="none" stroke="#d6d6d6" stroke-width="1.8" stroke-linecap="round"/></svg><svg class="a" style="left:319px;top:326px;" width="26" height="20" viewBox="0 0 26 20"><path d="M1 2.5 H17 L20 0.5 L24.5 2 L13 15 H1 Z" fill="#cfcfcf"/><path d="M4 11.5 C6 6 8 5 9 7.5 C9.5 9.5 8 12 10 11 L13 9" fill="none" stroke="#555" stroke-width="1.2"/><path d="M24 4 L14 15.5 L11 18.5 L11.8 14 L21.5 2.5" fill="#bdbdbd" stroke="#6b6b6b" stroke-width=".8"/></svg><div class="a" style="left:1588px;top:185px;width:17px;height:800px;background:#f0f0f0;border-left:1px solid #e3e3e3"></div><div class="a" style="left:1588px;top:185px;width:17px;height:8px;background:#e9e9e9;border:1px solid #bdbdbd"></div><svg class="a" style="left:1592px;top:199px;" width="9" height="6" viewBox="0 0 9 6"><path d="M0.5 5.5 L4.5 0.5 L8.5 5.5 Z" fill="#505050"/></svg><div class="a" style="left:1589px;top:240px;width:15px;height:16px;background:linear-gradient(90deg,#f6f6f6,#e3e3e3);border:1px solid #9c9c9c;border-radius:2px"></div><svg class="a" style="left:1592px;top:975px;" width="9" height="6" viewBox="0 0 9 6"><path d="M0.5 0.5 L4.5 5.5 L8.5 0.5 Z" fill="#505050"/></svg><div class="a" style="left:354px;top:985px;width:1251px;height:17px;background:#f0f0f0;border-top:1px solid #e5e5e5"></div><span class="t" style="left:374px;top:989px;font-size:11.36px;color:#222;">270 x 330 mm</span><svg class="a" style="left:471px;top:989px;" width="5" height="9" viewBox="0 0 5 9"><path d="M4.5 0.5 L0.5 4.5 L4.5 8.5 Z" fill="#444"/></svg><div class="a" style="left:638px;top:986px;width:910px;height:15px;background:linear-gradient(#f7f7f7,#e6e6e6 50%,#d8d8d8);border:1px solid #a9a9a9;border-radius:2px"></div><svg class="a" style="left:1089px;top:990px;" width="8" height="7" viewBox="0 0 8 7"><path d="M1 0 V7 M3.5 0 V7 M6 0 V7" stroke="#777" stroke-width="1"/></svg><svg class="a" style="left:1577px;top:989px;" width="5" height="9" viewBox="0 0 5 9"><path d="M0.5 0.5 L4.5 4.5 L0.5 8.5 Z" fill="#444"/></svg><div class="a" style="left:637px;top:185px;width:26px;height:2px;background:#8a8a8a;border-radius:0 0 2px 2px"></div><div class="a" style="left:770px;top:185px;width:6px;height:3px;background:#111;"></div><div class="a" style="left:938px;top:185px;width:14px;height:3px;background:#111;border-radius:0 0 6px 6px"></div><div class="a" style="left:638px;top:216px;width:758px;height:17.7px;font-size:17.7px;line-height:1;color:#1b1b1b;font-family:'DejaVu Sans Condensed','DejaVu Sans',sans-serif;text-align:justify;text-align-last:justify;white-space:nowrap;overflow:visible">En la unidad anterior ya comentamos la posibilidad de clasificar los seguros en función de</div><div class="a" style="left:638px;top:238px;width:758px;height:17.7px;font-size:17.7px;line-height:1;color:#1b1b1b;font-family:'DejaVu Sans Condensed','DejaVu Sans',sans-serif;text-align:justify;text-align-last:justify;white-space:nowrap;overflow:visible">diversos criterios, pero decantándonos por uno en el que distinguimos entre objetos o patri-</div><span class="t" style="left:638px;top:260px;font-size:17.95px;color:#1b1b1b;font-family:'DejaVu Sans Condensed','DejaVu Sans',sans-serif;">monio y personas.</span><div class="a" style="left:638px;top:880px;width:758px;height:17.7px;font-size:17.7px;line-height:1;color:#1b1b1b;font-family:'DejaVu Sans Condensed','DejaVu Sans',sans-serif;text-align:justify;text-align-last:justify;white-space:nowrap;overflow:visible">Nosotros seguiremos esta clasificación, y dividiremos esta unidad en dos grandes apartados:</div><div class="a" style="left:638px;top:903px;width:758px;height:17.7px;font-size:17.7px;line-height:1;color:#1b1b1b;font-family:'DejaVu Sans Condensed','DejaVu Sans',sans-serif;text-align:justify;text-align-last:justify;white-space:nowrap;overflow:visible">en el primero trabajaremos los seguros contra daños y en el segundo los seguros sobre las</div><span class="t" style="left:638px;top:926px;font-size:17.22px;color:#1b1b1b;font-family:'DejaVu Sans Condensed','DejaVu Sans',sans-serif;">personas (Fig. 10.1).</span><span class="t" style="left:736.5px;top:825px;font-size:15.15px;color:#5bb5b0;font-family:'DejaVu Sans Condensed','DejaVu Sans',sans-serif;">Fig. 10.1.</span><span class="t" style="left:804.4px;top:825px;font-size:14.64px;color:#1b1b1b;font-style:italic;font-family:'DejaVu Sans Condensed','DejaVu Sans',sans-serif;">Tipos de seguros.</span><svg class="a" style="left:0;top:0" width="1680" height="1050" viewBox="0 0 1680 1050"><g fill="none" stroke="#5fb3af" stroke-width="2"><path d="M831 591 H851"/><path d="M851 454.5 V728"/><path d="M850 454.5 H870"/><path d="M850 728 H870"/><path d="M972 454.5 H990"/><path d="M990 373.5 V535.7"/><path d="M989 373.5 H1010"/><path d="M989 535.7 H1010"/><path d="M1150 373.5 H1166"/><path d="M1166 324 V424.5"/><path d="M1165 324 H1186"/><path d="M1165 357.7 H1186"/><path d="M1165 391 H1186"/><path d="M1165 424.5 H1186"/><path d="M1150 535.7 H1166"/><path d="M1166 461 V609.5"/><path d="M1165 461 H1186"/><path d="M1165 494.6 H1186"/><path d="M1165 535.7 H1186"/><path d="M1165 576.5 H1186"/><path d="M1165 609.5 H1186"/><path d="M973 727.7 H990"/><path d="M990 669.8 V787.2"/><path d="M989 669.8 H1011"/><path d="M989 727.7 H1011"/><path d="M989 787.2 H1011"/></g></svg><div class="a" style="left:737px;top:573px;width:94px;height:36px;background:#5cc5be;box-shadow:1px 2px 4px rgba(60,90,90,.45);"></div><span class="t" style="left:746.24px;top:583px;font-size:15.1px;color:#1d1d1b;">SEGUROS</span><div class="a" style="left:870px;top:437px;width:102px;height:36px;background:#9ed7d4;"></div><span class="t" style="left:875.67px;top:447px;font-size:15.1px;color:#1d1d1b;">Contra daños</span><div class="a" style="left:870px;top:705px;width:103px;height:46px;background:#9ed7d4;"></div><span class="t" style="left:901.35px;top:710px;font-size:15.1px;color:#1d1d1b;">Sobre</span><span class="t" style="left:890.44px;top:729px;font-size:15.1px;color:#1d1d1b;">personas</span><div class="a" style="left:1010px;top:357px;width:95px;height:35px;background:#cde8e6;"></div><span class="t" style="left:1035.6px;top:366px;font-size:15.1px;color:#1d1d1b;">Cosas</span><div class="a" style="left:1010px;top:518px;width:95px;height:35px;background:#cde8e6;"></div><span class="t" style="left:1020.91px;top:527px;font-size:15.1px;color:#1d1d1b;">Patrimonio</span><div class="a" style="left:1011px;top:655px;width:181px;height:35px;background:#d3ebe9;"></div><span class="t" style="left:1072.4px;top:664px;font-size:15.1px;color:#1d1d1b;">De vida</span><div class="a" style="left:1011px;top:706px;width:181px;height:44px;background:#d3ebe9;"></div><span class="t" style="left:1050.16px;top:711px;font-size:15.1px;color:#1d1d1b;">De accidentes</span><span class="t" style="left:1025.39px;top:729px;font-size:15.1px;color:#1d1d1b;">y obligatorio de viajes</span><div class="a" style="left:1011px;top:772px;width:181px;height:36px;background:#d3ebe9;"></div><span class="t" style="left:1069.89px;top:781px;font-size:15.1px;color:#1d1d1b;">Médicos</span><div class="a" style="left:1185px;top:310px;width:123px;height:28px;border:2px solid #62b7b2;background:#fff;"></div><span class="t" style="left:1217.95px;top:316px;font-size:15.1px;color:#1d1d1b;">Incendio</span><div class="a" style="left:1185px;top:343px;width:123px;height:29px;border:2px solid #62b7b2;background:#fff;"></div><span class="t" style="left:1228.45px;top:349px;font-size:15.1px;color:#1d1d1b;">Robo</span><div class="a" style="left:1185px;top:377px;width:123px;height:28px;border:2px solid #62b7b2;background:#fff;"></div><span class="t" style="left:1210.27px;top:382px;font-size:15.1px;color:#1d1d1b;">Transporte</span><div class="a" style="left:1185px;top:410px;width:123px;height:28px;border:2px solid #62b7b2;background:#fff;"></div><span class="t" style="left:1222.16px;top:416px;font-size:15.1px;color:#1d1d1b;">Agrario</span><div class="a" style="left:1185px;top:446px;width:123px;height:29px;border:2px solid #62b7b2;background:#fff;"></div><span class="t" style="left:1199.07px;top:453px;font-size:15.1px;color:#1d1d1b;">Lucro cesante</span><div class="a" style="left:1185px;top:480px;width:123px;height:29px;border:2px solid #62b7b2;background:#fff;"></div><span class="t" style="left:1222.16px;top:486px;font-size:15.1px;color:#1d1d1b;">Crédito</span><div class="a" style="left:1185px;top:514px;width:123px;height:43px;border:2px solid #62b7b2;background:#fff;"></div><span class="t" style="left:1190.67px;top:518px;font-size:15.1px;color:#1d1d1b;">Responsabilidad</span><span class="t" style="left:1233.92px;top:536px;font-size:15.1px;color:#1d1d1b;">civil</span><div class="a" style="left:1185px;top:562px;width:123px;height:29px;border:2px solid #62b7b2;background:#fff;"></div><span class="t" style="left:1213.76px;top:568px;font-size:15.1px;color:#1d1d1b;">Vehículos</span><div class="a" style="left:1185px;top:595px;width:123px;height:29px;border:2px solid #62b7b2;background:#fff;"></div><span class="t" style="left:1209.56px;top:601px;font-size:15.1px;color:#1d1d1b;">Reaseguro</span><svg class="a" style="left:1098px;top:341px;" width="52" height="43" viewBox="0 0 52 43"><rect width="52" height="43" fill="#a4d8d5"/><path d="M5.5 19.5 C7 16 10 14.5 12 9 L13.5 13 C15 10 17 8.5 19 5.5 L20 10 C23 7 26 5.5 29.5 3 L29.8 8 L32.5 6.5 L33.5 10.5 C36 9.5 38.5 8.5 40.5 7 L41 12 L43 11.5 C47 15 47.5 22 45 27 C44 29.5 43 31 42 32 L41.8 21.5 Z" fill="#e8716a"/><path d="M37.5 12.5 C40 11 41.5 10 43 11.5 C47 15 47.5 22 45 27 C44 29.5 43 31 42 32 L41.8 21.5 L38 18 Z" fill="#e96f45"/><path d="M13 15 L14 11.5 L15.5 14 Z M24 9.5 L25.5 6.5 L27 9.5 Z M30 11 L31 8 L33 11.5 Z M38.5 14 L40 11 L41 15.5 Z" fill="#f7d9b8"/><path d="M3.7 21.7 L23.1 11.1 L41.7 21.7 Z" fill="#0f5f59"/><path d="M3.7 21.7 H41.7" stroke="#3a2c2c" stroke-width=".8"/><rect x="4.9" y="22" width="36.2" height="17.7" fill="#d9f0ee"/><rect x="8" y="27.1" width="7.7" height="8.6" fill="#a0d6d2"/><rect x="30" y="27.1" width="8.9" height="8.6" fill="#a0d6d2"/><rect x="19.1" y="27.1" width="8.9" height="12.6" fill="#2ab6af"/></svg><svg class="a" style="left:1098px;top:503px;" width="52" height="43" viewBox="0 0 52 43"><rect width="52" height="43" fill="#a4d8d5"/><path d="M40 10.5 L44.5 11.7 Q45.5 12 45.6 13 L46.5 24.5 Q46.5 25.5 45.5 25.8 L40 27 Z" fill="#d3ecea" stroke="#57b3ab" stroke-width=".9"/><path d="M9.4 11.1 L36 3.7 Q37.1 3.4 37.4 4.5 L40.6 18 L13.1 26 Z" fill="#daf0ee" stroke="#57b3ab" stroke-width=".9"/><path d="M4.3 33.5 V28 Q4.3 26 6 26 H8.6 L11.4 20.3 H26.3 L34.9 26 Q40 27.5 42.5 30 Q43.7 31.5 43.7 33 V35 Q43.7 36 42.5 36 H5.5 Q4.3 36 4.3 34.5 Z" fill="#e4544b"/><path d="M9.8 25.8 L12.2 21.3 H19.5 V25.8 Z M21.5 21.3 H26 L32.5 25.8 H21.5 Z" fill="#f1e4e0"/><path d="M28 19.5 L34.5 24 L33.5 25.5" fill="none" stroke="#2f7f78" stroke-width="1.1"/><circle cx="12.6" cy="34.9" r="3.3" fill="#d9f1ef" stroke="#3a8f87" stroke-width=".9"/><circle cx="36.6" cy="34.9" r="3.3" fill="#d9f1ef" stroke="#3a8f87" stroke-width=".9"/><path d="M41 29.5 L43.3 31.8" stroke="#fbe9e6" stroke-width="1.4"/><text x="24.5" y="17.6" font-family="Liberation Sans,sans-serif" font-weight="bold" font-size="11.5" fill="#1d8079" text-anchor="middle" transform="rotate(-14 24.5 13.5)">€</text></svg><svg class="a" style="left:1185px;top:639px;" width="52" height="43" viewBox="0 0 52 43"><rect width="52" height="43" fill="#a4d8d5"/><path d="M3.7 29.5 V24 Q3.7 19 7 18.2 L24.5 16 H32 L40.5 21.3 Q46 23.5 47.5 25.5 Q48.3 26.5 48.3 28 V30.6 H45 A3.6 3.6 0 0 0 37.8 30.6 H8.5 Q3.7 31 3.7 29.5 Z" fill="#0d6661"/><path d="M8 21.5 Q8.5 19.3 10.5 19 L24.5 17.5 L26.5 22 H8 Z M26.5 17.5 H31.5 L38.5 22 H28.5 Z" fill="#d9f3f1"/><path d="M44 24 L47.3 26.3" stroke="#eafaf8" stroke-width="1.5"/><circle cx="41.4" cy="29.5" r="3" fill="#e5f7f5" stroke="#0d6661" stroke-width=".6"/><rect x="10.9" y="5.7" width="4.8" height="33.7" fill="#2fb9ae"/><rect x="2.9" y="12.9" width="19.7" height="4" fill="#2fb9ae"/></svg><svg class="a" style="left:1185px;top:699px;" width="52" height="43" viewBox="0 0 52 43"><rect width="52" height="43" fill="#a4d8d5"/><rect x="0" y="38" width="52" height="5" fill="#86b5b1"/><path d="M0 24.9 H28 Q31 24.9 33 22.5 H48.6 L40 33 V38 H0 Z" fill="#075e5c"/><path d="M0 15.7 H22.5 Q23.4 15.7 23.4 14.5 V13 Q23.4 11.7 25 11.7 H27 Q28.6 11.7 28.6 13.5 V22 Q28.6 24.9 26 24.9 H0 Z" fill="#fdfefe"/><rect x="4.9" y="5.7" width="6" height="5" fill="#c0606b"/><rect x="4.9" y="10.7" width="6" height="4.8" fill="#1f9a90"/><circle cx="37.4" cy="8" r="3" fill="#2fb0a6"/><path d="M32 12 H40 Q42 12 43 14 L46 22 L44 23 L41.5 18 V38 H38.5 V27 H37.5 V38 H34.5 V17 L32 16 Z" fill="#2fb0a6"/><path d="M31 16.5 Q30.5 19.5 33 20.5 L38 20 L37.5 16.5 Z" fill="#fdfefe"/></svg><svg class="a" style="left:1185px;top:757px;" width="52" height="43" viewBox="0 0 52 43"><rect width="52" height="43" fill="#a4d8d5"/><rect x="35.7" y="4.3" width="11.2" height="11.4" rx="1.8" fill="#6cc6e6"/><rect x="36.6" y="5.2" width="9.4" height="9.6" rx="1.2" fill="#3b98c2"/><text x="41.3" y="13.6" font-family="Liberation Sans,sans-serif" font-weight="bold" font-size="10" fill="#f4fbfd" text-anchor="middle">H</text><rect x="13.1" y="3.4" width="4.6" height="6.9" fill="#e8f5f4"/><path d="M15.4 10.3 L20.5 18.5" stroke="#6dbfb5" stroke-width="1.3"/><circle cx="10" cy="19.7" r="3.2" fill="#1fa898"/><path d="M2.9 23 Q6 20.3 12 22.3 Q14 20.3 22 20.3 H38 Q42 20.3 44 19 Q46.6 19 46.6 21 V32 Q46.6 34 44 34 Q36 34 30 32.5 Q24 31 18 32.5 Q13 34 11.5 34 V29 H4 Q2.9 26 2.9 23 Z" fill="#fbfefe"/><rect x="4" y="29.4" width="6.9" height="2" fill="#1f6e66"/><rect x="6.9" y="31" width="2.2" height="9.3" fill="#1f6e66"/><rect x="39.1" y="35.1" width="2.3" height="5.2" fill="#1f6e66"/><circle cx="46.3" cy="30.3" r="1.1" fill="#234"/></svg><div class="a" style="left:884.95px;top:548.85px;width:64px;height:84px;transform:rotate(-17.5deg);transform-origin:50% 50%"><div class="a" style="left:0;top:0;width:64px;height:84px;background:#f3fbfa;border:1px solid #3f827d;box-shadow:-3px 6px 7px rgba(90,110,110,.5)"></div><div class="a" style="left:6px;top:16px;width:52px;height:13px;background:#dbe7e5"></div><span class="t" style="left:12px;top:2.5px;font-size:12.6px;color:#4fb8ae">Póliza</span><div class="a" style="left:50px;top:15.5px;width:8px;height:1.5px;background:#49b6ac"></div><div class="a" style="left:7px;top:17.5px;width:20px;height:1.5px;background:#49c0b5"></div><div class="a" style="left:7px;top:20.5px;width:14px;height:1.5px;background:#49c0b5"></div><div class="a" style="left:7px;top:23.5px;width:10px;height:1.5px;background:#49c0b5"></div><div class="a" style="left:7px;top:31px;width:50px;height:1.8px;background:#93d9d0"></div><div class="a" style="left:7px;top:34.5px;width:50px;height:1.8px;background:#93d9d0"></div><div class="a" style="left:7px;top:38px;width:50px;height:1.8px;background:#93d9d0"></div><div class="a" style="left:7px;top:41.5px;width:50px;height:1.8px;background:#93d9d0"></div><div class="a" style="left:7px;top:45px;width:32px;height:1.8px;background:#93d9d0"></div><div class="a" style="left:7px;top:49px;width:50px;height:1.8px;background:#93d9d0"></div><div class="a" style="left:7px;top:52.5px;width:50px;height:1.8px;background:#93d9d0"></div><div class="a" style="left:7px;top:56px;width:50px;height:1.8px;background:#93d9d0"></div><div class="a" style="left:7px;top:59.5px;width:44px;height:1.8px;background:#93d9d0"></div><div class="a" style="left:7px;top:63px;width:50px;height:1.8px;background:#93d9d0"></div><div class="a" style="left:7px;top:66.5px;width:50px;height:1.8px;background:#93d9d0"></div><div class="a" style="left:7px;top:72.5px;width:20px;height:1.8px;background:#93d9d0"></div><svg class="a" style="left:35px;top:64px" width="26" height="18" viewBox="0 0 26 18"><path d="M1 16 C5 14 8 10 10 4 C9.5 8 10 10 12 9.5 C14 9 15 7 16 6 C16 8 18 7.5 23 5.5" fill="none" stroke="#3fb2a6" stroke-width="1"/></svg></div>
</body>
</html>
